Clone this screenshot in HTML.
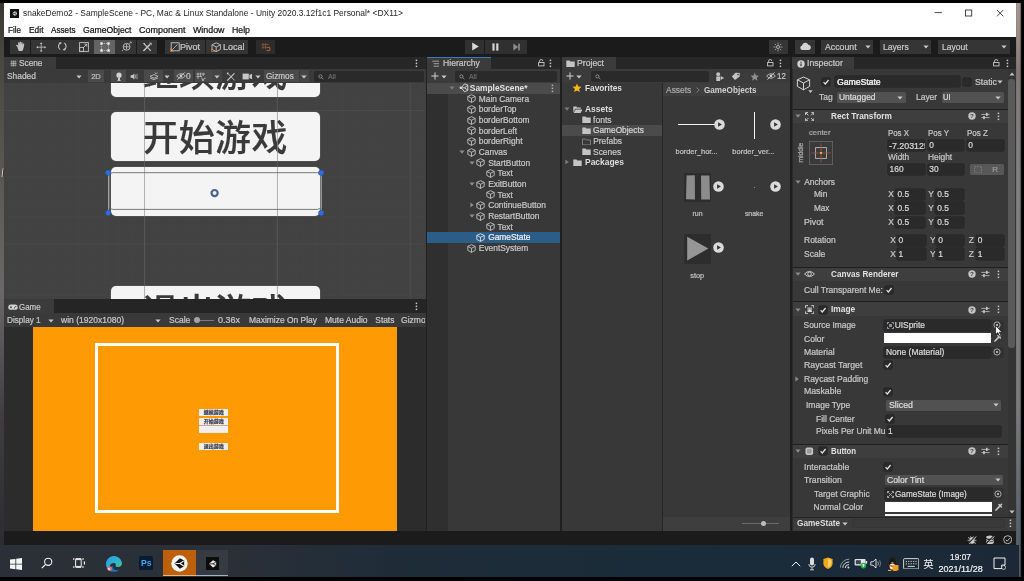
<!DOCTYPE html>
<html><head><meta charset="utf-8"><title>Unity</title>
<style>
html,body{margin:0;padding:0;background:#000;}
body{width:1024px;height:581px;overflow:hidden;position:relative;font-family:"Liberation Sans","Noto Sans CJK SC",sans-serif;}
#r{position:absolute;left:0;top:0;width:1024px;height:581px;overflow:hidden;filter:blur(.4px);}
#r div,#r span,#r svg{position:absolute;}
#r div{box-sizing:border-box;}
.t{white-space:nowrap;line-height:1;-webkit-text-stroke:.22px;}
.cj{font-family:"Liberation Sans","Noto Sans CJK SC",sans-serif;}
</style></head><body><div id="r">
<div style="left:0px;top:0px;width:1024px;height:581px;background:#000;"></div>
<div style="left:0px;top:3px;width:4.2px;height:543px;background:linear-gradient(180deg,#3b3733 0%,#4a4642 10%,#575550 27%,#6a6868 53%,#5a585a 62%,#3e3c40 77%,#2c2c32 100%);"></div>
<div style="left:1015.8px;top:3px;width:8.2px;height:573.8px;background:linear-gradient(180deg,#a89a94 0%,#9c8e8a 6%,#857c7a 12%,#838383 30%,#7e7e7e 70%,#5e666e 90%,#525c68 100%);"></div>
<div style="left:1015.8px;top:3px;width:8.2px;height:573.8px;background:linear-gradient(90deg,rgba(0,0,0,.2) 0%,rgba(0,0,0,0) 12%,rgba(0,0,0,.06) 50%,rgba(0,0,0,.45) 60%,rgba(0,0,0,.9) 68%,#000 76%);"></div>
<div style="left:4px;top:3px;width:1011.8px;height:33.5px;background:#fff;"></div>
<div style="left:10px;top:8.5px;width:9px;height:9px;background:#111;"></div>
<svg style="left:10px;top:8.5px;" width="9" height="9" viewBox="0 0 9 9"><path d="M2 4.5 L4.5 2.3 L7 3 L7 6 L4.5 6.7 Z" fill="#cfcfcf"/><path d="M4.5 4.5 L2 4.5 M4.5 4.5 L7 3 M4.5 4.5 L7 6" stroke="#111" stroke-width=".6"/></svg>
<span class="t" style="left:23.00px;top:9px;font-size:8.4px;color:#262626;transform:scaleX(1.0090);transform-origin:left center;-webkit-text-stroke:0;">snakeDemo2 - SampleScene - PC, Mac &amp; Linux Standalone - Unity 2020.3.12f1c1 Personal* &lt;DX11&gt;</span>
<svg style="left:930px;top:8px;" width="80" height="12" viewBox="0 0 80 12"><path d="M4.6 4.6 H11.8" stroke="#333" stroke-width=".9"/><rect x="35.5" y="2" width="6.2" height="6" fill="none" stroke="#333" stroke-width=".9"/><path d="M67 2 L73.3 8.3 M73.3 2 L67 8.3" stroke="#333" stroke-width=".9"/></svg>
<span class="t" style="left:8.00px;top:26px;font-size:8.6px;color:#111;transform:scaleX(0.9381);transform-origin:left center;">File</span>
<span class="t" style="left:29.00px;top:26px;font-size:8.6px;color:#111;transform:scaleX(0.9784);transform-origin:left center;">Edit</span>
<span class="t" style="left:51.00px;top:26px;font-size:8.6px;color:#111;transform:scaleX(0.9493);transform-origin:left center;">Assets</span>
<span class="t" style="left:83.00px;top:26px;font-size:8.6px;color:#111;transform:scaleX(1.0047);transform-origin:left center;">GameObject</span>
<span class="t" style="left:139.00px;top:26px;font-size:8.6px;color:#111;transform:scaleX(1.0458);transform-origin:left center;">Component</span>
<span class="t" style="left:193.00px;top:26px;font-size:8.6px;color:#111;transform:scaleX(1.0298);transform-origin:left center;">Window</span>
<span class="t" style="left:232.00px;top:26px;font-size:8.6px;color:#111;transform:scaleX(1.0177);transform-origin:left center;">Help</span>
<div style="left:4px;top:36.5px;width:1011.8px;height:20px;background:#1b1b1b;"></div>
<div style="left:9.9px;top:39.5px;width:20.6px;height:14.3px;background:#353535;"></div>
<div style="left:31px;top:39.5px;width:20.6px;height:14.3px;background:#353535;"></div>
<div style="left:52.1px;top:39.5px;width:20.6px;height:14.3px;background:#353535;"></div>
<div style="left:73.2px;top:39.5px;width:20.6px;height:14.3px;background:#353535;"></div>
<div style="left:94.3px;top:39.5px;width:20.6px;height:14.3px;background:#646464;"></div>
<div style="left:115.4px;top:39.5px;width:20.6px;height:14.3px;background:#353535;"></div>
<div style="left:136.5px;top:39.5px;width:20.6px;height:14.3px;background:#353535;"></div>
<svg style="left:15.3px;top:40.8px;" width="10.6" height="10.6" viewBox="0 0 10.6 10.6"><path d="M2.4 6 L1 4.2 Q1.5 3.2 2.5 4 L3.2 4.9 L3.1 1.7 Q3.7 .9 4.3 1.7 L4.5 3.6 L4.6 .9 Q5.3 .2 5.9 .9 L6 3.6 L6.4 1.4 Q7.1 .8 7.6 1.5 L7.5 4 L8.2 2.6 Q8.9 2.2 9.3 2.9 L8.7 6.6 Q8.2 8.8 7.2 10 L3.8 10 Q3 8 2.4 6 Z" fill="#c4c4c4"/></svg>
<svg style="left:36.3px;top:41.5px;" width="10.4" height="10.4" viewBox="0 0 10.4 10.4"><path d="M5.2 1.6 V8.8 M1.6 5.2 H8.8" stroke="#c4c4c4" stroke-width=".8"/><path d="M5.2 .2 L6.5 2 H3.9Z M5.2 10.2 L6.5 8.4 H3.9Z M.2 5.2 L2 3.9 V6.5Z M10.2 5.2 L8.4 3.9 V6.5Z" fill="#c4c4c4"/></svg>
<svg style="left:57.3px;top:41.3px;" width="10.6" height="10.6" viewBox="0 0 10.6 10.6"><path d="M3.2 8.6 A4 4 0 0 1 3.4 1.9" fill="none" stroke="#c4c4c4" stroke-width="1.1"/><path d="M7.4 2 A4 4 0 0 1 7.2 8.7" fill="none" stroke="#c4c4c4" stroke-width="1.1"/><path d="M2.2 1 L5 1.7 L3 3.6Z M8.4 9.6 L5.6 8.9 L7.6 7Z" fill="#c4c4c4"/></svg>
<svg style="left:78.6px;top:41.6px;" width="10" height="10" viewBox="0 0 10 10"><rect x=".6" y=".6" width="8.8" height="8.8" fill="none" stroke="#c4c4c4" stroke-width=".9"/><rect x=".6" y="5.4" width="4" height="4" fill="none" stroke="#c4c4c4" stroke-width=".9"/><path d="M4.6 5.4 L7.6 2.4 M5.4 2.2 H7.8 V4.6" fill="none" stroke="#c4c4c4" stroke-width=".9"/></svg>
<svg style="left:99.6px;top:41.6px;" width="10" height="10" viewBox="0 0 10 10"><path d="M1.5 1.5 H8.5 V8.5 H1.5Z" fill="none" stroke="#e8e8e8" stroke-width=".6" stroke-dasharray="1.2 1"/><g fill="#f0f0f0"><rect x=".3" y=".3" width="2.4" height="2.4"/><rect x="7.3" y=".3" width="2.4" height="2.4"/><rect x=".3" y="7.3" width="2.4" height="2.4"/><rect x="7.3" y="7.3" width="2.4" height="2.4"/></g></svg>
<svg style="left:120.5px;top:41.2px;" width="11" height="11" viewBox="0 0 11 11"><circle cx="5.6" cy="5.8" r="3.4" fill="none" stroke="#c4c4c4" stroke-width=".9"/><path d="M5.6 3 V8.6 M2.6 5.8 H8.4" stroke="#c4c4c4" stroke-width=".8"/><path d="M1 10 L2.4 8.6 M8.6 2.6 L10 1.2 M8.8 1 H10.2 V2.4" stroke="#c4c4c4" stroke-width=".8" fill="none"/></svg>
<svg style="left:141.6px;top:41.5px;" width="10.4" height="10.4" viewBox="0 0 10.4 10.4"><path d="M1.4 9 L8 2.4" stroke="#c4c4c4" stroke-width="1.5"/><path d="M2 1.6 L8.8 8.8" stroke="#c4c4c4" stroke-width="1.2"/><path d="M7 .8 L9.6 .8 L9.6 3.4Z M.8 1 L3 1 L3 3.2Z" fill="#c4c4c4"/></svg>
<div style="left:165.2px;top:39.5px;width:40.2px;height:14.3px;background:#353535;"></div>
<div style="left:206px;top:39.5px;width:42.2px;height:14.3px;background:#353535;"></div>
<div style="left:256px;top:39.5px;width:18.6px;height:14.3px;background:#2c2c2c;"></div>
<svg style="left:169.5px;top:41.7px;" width="10" height="10" viewBox="0 0 10 10"><rect x="1.2" y=".8" width="8" height="8" fill="none" stroke="#c4c4c4" stroke-width=".9"/><path d="M1.2 8.8 L7.6 2.4" stroke="#c4c4c4" stroke-width=".8"/><path d="M.4 6 V9.6 H4" fill="none" stroke="#c8702a" stroke-width=".9"/></svg>
<span class="t" style="left:180.20px;top:43px;font-size:8.4px;color:#c6c6c6;transform:scaleX(1.0817);transform-origin:left center;">Pivot</span>
<svg style="left:211px;top:41.5px;" width="10.5" height="10.5" viewBox="0 0 10.5 10.5"><path d="M5.2 .8 L9.4 2.8 V7.4 L5.2 9.6 L1 7.4 V2.8Z M1 2.8 L5.2 5 L9.4 2.8 M5.2 5 V9.6" fill="none" stroke="#c4c4c4" stroke-width=".9"/><path d="M.6 6.4 V9.6 H4" fill="none" stroke="#c8702a" stroke-width=".9"/></svg>
<span class="t" style="left:222.80px;top:43px;font-size:8.4px;color:#c6c6c6;transform:scaleX(1.0706);transform-origin:left center;">Local</span>
<svg style="left:260.5px;top:41.5px;" width="10.5" height="10.5" viewBox="0 0 10.5 10.5"><path d="M2 1 V7 M4.6 1 V7 M.6 2.6 H8 M.6 5.2 H6" stroke="#8a5a3a" stroke-width=".8"/><path d="M6 5.4 H8.8 V8.6 H5.4" fill="none" stroke="#b4622c" stroke-width="1"/></svg>
<div style="left:464.6px;top:39.7px;width:19.4px;height:14px;background:#303030;"></div>
<div style="left:484.8px;top:39.7px;width:20.8px;height:14px;background:#303030;"></div>
<div style="left:506.4px;top:39.7px;width:20.8px;height:14px;background:#303030;"></div>
<svg style="left:470.5px;top:42.2px;" width="9" height="9" viewBox="0 0 9 9"><path d="M1.2 .6 L7.8 4.5 L1.2 8.4Z" fill="#d8d8d8"/></svg>
<svg style="left:490.5px;top:42.5px;" width="9" height="8" viewBox="0 0 9 8"><rect x="1.4" y=".4" width="2.2" height="7.2" fill="#d4d4d4"/><rect x="5.2" y=".4" width="2.2" height="7.2" fill="#d4d4d4"/></svg>
<svg style="left:511.5px;top:42.5px;" width="10" height="8" viewBox="0 0 10 8"><path d="M1.4 .6 L6.2 4 L1.4 7.4Z" fill="#8c8c8c"/><rect x="6.2" y=".6" width="1.6" height="6.8" fill="#8c8c8c"/></svg>
<div style="left:768.5px;top:39.7px;width:19.5px;height:14px;background:#353535;"></div>
<div style="left:794.8px;top:39.7px;width:20.4px;height:14px;background:#353535;"></div>
<div style="left:821.4px;top:39.7px;width:52px;height:14px;background:#353535;"></div>
<div style="left:879.9px;top:39.7px;width:51.6px;height:14px;background:#353535;"></div>
<div style="left:938.4px;top:39.7px;width:71.8px;height:14px;background:#353535;"></div>
<svg style="left:773px;top:41.8px;" width="10" height="10" viewBox="0 0 10 10"><circle cx="5" cy="5" r="1.5" fill="none" stroke="#c4c4c4" stroke-width=".8"/><path d="M5 .6 V2.6 M5 7.4 V9.4 M.6 5 H2.6 M7.4 5 H9.4 M1.9 1.9 L3.2 3.2 M6.8 6.8 L8.1 8.1 M1.9 8.1 L3.2 6.8 M6.8 3.2 L8.1 1.9" stroke="#c4c4c4" stroke-width=".7"/></svg>
<svg style="left:798.5px;top:42px;" width="13" height="9" viewBox="0 0 13 9"><path d="M3 8 A2.4 2.4 0 0 1 3 3.4 A3.4 3.4 0 0 1 9.4 2.8 A2.7 2.7 0 0 1 10.2 8 Z" fill="#d2d2d2"/></svg>
<span class="t" style="left:825.00px;top:43px;font-size:8.4px;color:#c6c6c6;transform:scaleX(1.0444);transform-origin:left center;">Account</span>
<span class="t" style="left:883.20px;top:43px;font-size:8.4px;color:#c6c6c6;transform:scaleX(1.0233);transform-origin:left center;">Layers</span>
<span class="t" style="left:941.70px;top:43px;font-size:8.4px;color:#c6c6c6;transform:scaleX(1.0230);transform-origin:left center;">Layout</span>
<svg style="left:864.8px;top:45px;" width="6" height="4" viewBox="0 0 6 4"><path d="M.4 .4 H5.6 L3 3.6Z" fill="#c8c8c8"/></svg>
<svg style="left:922.8px;top:45px;" width="6" height="4" viewBox="0 0 6 4"><path d="M.4 .4 H5.6 L3 3.6Z" fill="#c8c8c8"/></svg>
<svg style="left:1000.6px;top:45px;" width="6" height="4" viewBox="0 0 6 4"><path d="M.4 .4 H5.6 L3 3.6Z" fill="#c8c8c8"/></svg>
<div style="left:4px;top:56.5px;width:1012px;height:475px;background:#262626;"></div>
<div style="left:4px;top:56.5px;width:421.5px;height:12.5px;background:#272727;"></div>
<div style="left:4px;top:56.5px;width:51.5px;height:12.5px;background:#3b3b3b;"></div>
<div style="left:4px;top:69px;width:421.5px;height:14px;background:#3a3a3a;"></div>
<div style="left:4px;top:83px;width:421.5px;height:216px;background:#424242;"></div>
<div style="left:4px;top:299px;width:421.5px;height:14px;background:#252525;"></div>
<div style="left:4px;top:299px;width:50px;height:14px;background:#3b3b3b;"></div>
<div style="left:4px;top:313px;width:421.5px;height:14px;background:#393939;"></div>
<div style="left:4px;top:327px;width:422px;height:204.5px;background:#2c2c2c;"></div>
<div style="left:427px;top:56.5px;width:133px;height:12.5px;background:#272727;"></div>
<div style="left:427px;top:57px;width:64px;height:12px;background:#3b3b3b;"></div>
<div style="left:427px;top:56.5px;width:64px;height:1px;background:#3a79bb;"></div>
<div style="left:427px;top:69px;width:133px;height:14px;background:#3b3b3b;"></div>
<div style="left:427px;top:83px;width:133px;height:448px;background:#383838;"></div>
<div style="left:562px;top:56.5px;width:228px;height:12.5px;background:#272727;"></div>
<div style="left:562px;top:57px;width:54px;height:12px;background:#3b3b3b;"></div>
<div style="left:562px;top:69px;width:228px;height:14px;background:#3b3b3b;"></div>
<div style="left:562px;top:83px;width:228px;height:448px;background:#383838;"></div>
<div style="left:792px;top:56.5px;width:224px;height:12.5px;background:#272727;"></div>
<div style="left:792px;top:57px;width:62px;height:12px;background:#3b3b3b;"></div>
<div style="left:792px;top:69px;width:224px;height:462px;background:#383838;"></div>
<div style="left:4px;top:531px;width:1011.8px;height:14px;background:#1b1b1b;"></div>
<div style="left:0px;top:545px;width:1019px;height:31.8px;background:linear-gradient(90deg,#2b3038 0%,#2a3038 22%,#1e2c38 40%,#1a2c3a 70%,#1c2836 100%);"></div>
<div style="left:790px;top:56.5px;width:1.7px;height:474.5px;background:#1e1e1e;"></div>
<div style="left:560px;top:56.5px;width:1.6px;height:474.5px;background:#1f1f1f;"></div>
<div style="left:425.6px;top:56.5px;width:1.2px;height:474.5px;background:#212121;"></div>
<svg style="left:9.5px;top:59.5px;" width="7" height="7" viewBox="0 0 7 7"><path d="M1.8 .4 V6.6 M3.5 .4 V6.6 M5.2 .4 V6.6 M.4 1.8 H6.6 M.4 3.5 H6.6 M.4 5.2 H6.6" stroke="#c4c4c4" stroke-width=".6"/></svg>
<span class="t" style="left:19.30px;top:59px;font-size:8.4px;color:#c6c6c6;transform:scaleX(0.9866);transform-origin:left center;">Scene</span>
<svg style="left:415px;top:58.5px;" width="3" height="9" viewBox="0 0 3 9"><g fill="#c8c8c8"><rect x=".7" y=".6" width="1.5" height="1.5"/><rect x=".7" y="3.6" width="1.5" height="1.5"/><rect x=".7" y="6.6" width="1.5" height="1.5"/></g></svg>
<span class="t" style="left:7.00px;top:72px;font-size:8.4px;color:#c6c6c6;">Shaded</span>
<svg style="left:75.5px;top:74.5px;" width="6" height="4" viewBox="0 0 6 4"><path d="M.4 .4 H5.6 L3 3.6Z" fill="#c8c8c8"/></svg>
<div style="left:88px;top:70.3px;width:16px;height:12px;background:#4a4a4a;"></div>
<span class="t" style="left:91.14px;top:73px;font-size:7.6px;color:#bdbdbd;">2D</span>
<div style="left:110.6px;top:70.3px;width:15.4px;height:12px;background:#4a4a4a;"></div>
<svg style="left:114.5px;top:71.8px;" width="8" height="9.5" viewBox="0 0 8 9.5"><circle cx="4" cy="3.2" r="2.6" fill="#d0d0d0"/><rect x="3" y="5.6" width="2" height="2.4" fill="#d0d0d0"/><rect x="2.4" y="8" width="3.2" height=".9" fill="#d0d0d0"/></svg>
<svg style="left:130px;top:73px;" width="9" height="7" viewBox="0 0 9 7"><path d="M.6 2.2 H2.2 L4.4 .4 V6.6 L2.2 4.8 H.6Z" fill="#c8c8c8"/><path d="M5.6 1.6 V5.4 M7 .8 V6.2" stroke="#b0b0b0" stroke-width=".8"/></svg>
<div style="left:144px;top:70.3px;width:18.6px;height:12px;background:#4a4a4a;"></div>
<svg style="left:148.5px;top:72.3px;" width="10" height="8" viewBox="0 0 10 8"><path d="M1 4.4 L5 2.6 L9 4.4 L5 6.2Z M1 6 L5 7.6 L9 6" fill="none" stroke="#c8c8c8" stroke-width=".8"/><path d="M6 .6 L7 2.2 M8.2 .4 L7.6 1.8" stroke="#c8c8c8" stroke-width=".7"/></svg>
<svg style="left:163.8px;top:74.6px;" width="6" height="4" viewBox="0 0 6 4"><path d="M.4 .4 H5.6 L3 3.6Z" fill="#c8c8c8"/></svg>
<div style="left:174px;top:70.3px;width:19px;height:12px;background:#4a4a4a;"></div>
<svg style="left:175.5px;top:72.2px;" width="10" height="8" viewBox="0 0 10 8"><path d="M.6 4 Q5 -.6 9.4 4 Q5 8.6 .6 4Z" fill="none" stroke="#c8c8c8" stroke-width=".8"/><circle cx="5" cy="4" r="1.4" fill="#c8c8c8"/><path d="M1.4 7.6 L8.6 .4" stroke="#c8c8c8" stroke-width=".9"/></svg>
<span class="t" style="left:186.00px;top:72px;font-size:8.4px;color:#c6c6c6;">0</span>
<div style="left:195px;top:70.3px;width:16.8px;height:12px;background:#4a4a4a;"></div>
<div style="left:212.2px;top:70.3px;width:9.6px;height:12px;background:#444444;"></div>
<svg style="left:195.5px;top:71.8px;" width="10" height="9.5" viewBox="0 0 10 9.5"><path d="M2 .6 V7 M4.6 .6 V5 M7.2 .6 V4 M.4 2 H9 M.4 4.4 H6" stroke="#c8c8c8" stroke-width=".7"/><path d="M5.6 5.6 L7 9 L8 6.6 L9.6 6" stroke="#c8c8c8" stroke-width=".8" fill="none"/></svg>
<svg style="left:214px;top:74.6px;" width="6" height="4" viewBox="0 0 6 4"><path d="M.4 .4 H5.6 L3 3.6Z" fill="#c8c8c8"/></svg>
<svg style="left:225.5px;top:71.8px;" width="10" height="9.5" viewBox="0 0 10 9.5"><path d="M1.2 8.6 L8.4 1.4" stroke="#c8c8c8" stroke-width="1.2"/><path d="M1.6 1.2 L8.6 8.4" stroke="#c8c8c8" stroke-width=".9"/><path d="M.8 .6 L3 .8 L1 2.8Z" fill="#c8c8c8"/></svg>
<svg style="left:241.5px;top:73px;" width="11" height="7" viewBox="0 0 11 7"><rect x=".6" y=".6" width="6.2" height="5.8" fill="#c8c8c8"/><path d="M7.4 2 L10 .8 V6.2 L7.4 5Z" fill="#c8c8c8"/></svg>
<svg style="left:255px;top:74.6px;" width="6" height="4" viewBox="0 0 6 4"><path d="M.4 .4 H5.6 L3 3.6Z" fill="#c8c8c8"/></svg>
<div style="left:264px;top:70.3px;width:35px;height:12px;background:#4a4a4a;"></div>
<span class="t" style="left:266.00px;top:72px;font-size:8.4px;color:#c6c6c6;transform:scaleX(0.9765);transform-origin:left center;">Gizmos</span>
<div style="left:299.6px;top:70.3px;width:9.6px;height:12px;background:#454545;"></div>
<svg style="left:300.7px;top:74.6px;" width="6" height="4" viewBox="0 0 6 4"><path d="M.4 .4 H5.6 L3 3.6Z" fill="#c8c8c8"/></svg>
<div style="left:314.3px;top:70.6px;width:109.5px;height:11px;background:#2a2a2a;border-radius:2px;"></div>
<svg style="left:317.5px;top:73.5px;" width="7" height="6" viewBox="0 0 7 6"><circle cx="2.4" cy="2.4" r="1.6" fill="none" stroke="#9a9a9a" stroke-width=".8"/><path d="M3.6 3.6 L5.4 5.2" stroke="#9a9a9a" stroke-width=".8"/></svg>
<span class="t" style="left:328.30px;top:73px;font-size:8px;color:#6c6c6c;transform:scaleX(0.8660);transform-origin:left center;">All</span>
<svg style="left:4px;top:83px;" width="420.5" height="216" viewBox="0 0 420.5 216"><path d="M8.40 0 V216" stroke="#464646" stroke-width=".6"/><path d="M21.63 0 V216" stroke="#464646" stroke-width=".6"/><path d="M34.86 0 V216" stroke="#464646" stroke-width=".6"/><path d="M48.09 0 V216" stroke="#464646" stroke-width=".6"/><path d="M61.32 0 V216" stroke="#464646" stroke-width=".6"/><path d="M74.55 0 V216" stroke="#464646" stroke-width=".6"/><path d="M87.78 0 V216" stroke="#464646" stroke-width=".6"/><path d="M101.01 0 V216" stroke="#464646" stroke-width=".6"/><path d="M114.24 0 V216" stroke="#464646" stroke-width=".6"/><path d="M127.47 0 V216" stroke="#464646" stroke-width=".6"/><path d="M140.70 0 V216" stroke="#464646" stroke-width=".6"/><path d="M153.93 0 V216" stroke="#464646" stroke-width=".6"/><path d="M167.16 0 V216" stroke="#464646" stroke-width=".6"/><path d="M180.39 0 V216" stroke="#464646" stroke-width=".6"/><path d="M193.62 0 V216" stroke="#464646" stroke-width=".6"/><path d="M206.85 0 V216" stroke="#464646" stroke-width=".6"/><path d="M220.08 0 V216" stroke="#464646" stroke-width=".6"/><path d="M233.31 0 V216" stroke="#464646" stroke-width=".6"/><path d="M246.54 0 V216" stroke="#464646" stroke-width=".6"/><path d="M259.77 0 V216" stroke="#464646" stroke-width=".6"/><path d="M273.00 0 V216" stroke="#464646" stroke-width=".6"/><path d="M286.23 0 V216" stroke="#464646" stroke-width=".6"/><path d="M299.46 0 V216" stroke="#464646" stroke-width=".6"/><path d="M312.69 0 V216" stroke="#464646" stroke-width=".6"/><path d="M325.92 0 V216" stroke="#464646" stroke-width=".6"/><path d="M339.15 0 V216" stroke="#464646" stroke-width=".6"/><path d="M352.38 0 V216" stroke="#464646" stroke-width=".6"/><path d="M365.61 0 V216" stroke="#464646" stroke-width=".6"/><path d="M378.84 0 V216" stroke="#464646" stroke-width=".6"/><path d="M392.07 0 V216" stroke="#464646" stroke-width=".6"/><path d="M405.30 0 V216" stroke="#464646" stroke-width=".6"/><path d="M418.53 0 V216" stroke="#464646" stroke-width=".6"/><path d="M0 0.94 H420.5" stroke="#464646" stroke-width=".6"/><path d="M0 14.17 H420.5" stroke="#464646" stroke-width=".6"/><path d="M0 27.40 H420.5" stroke="#464646" stroke-width=".6"/><path d="M0 40.63 H420.5" stroke="#464646" stroke-width=".6"/><path d="M0 53.86 H420.5" stroke="#464646" stroke-width=".6"/><path d="M0 67.09 H420.5" stroke="#464646" stroke-width=".6"/><path d="M0 80.32 H420.5" stroke="#464646" stroke-width=".6"/><path d="M0 93.55 H420.5" stroke="#464646" stroke-width=".6"/><path d="M0 106.78 H420.5" stroke="#464646" stroke-width=".6"/><path d="M0 120.01 H420.5" stroke="#464646" stroke-width=".6"/><path d="M0 133.24 H420.5" stroke="#464646" stroke-width=".6"/><path d="M0 146.47 H420.5" stroke="#464646" stroke-width=".6"/><path d="M0 159.70 H420.5" stroke="#464646" stroke-width=".6"/><path d="M0 172.93 H420.5" stroke="#464646" stroke-width=".6"/><path d="M0 186.16 H420.5" stroke="#464646" stroke-width=".6"/><path d="M0 199.39 H420.5" stroke="#464646" stroke-width=".6"/><path d="M0 212.62 H420.5" stroke="#464646" stroke-width=".6"/><path d="M140.60 0 V216" stroke="#4e4e4e" stroke-width=".8"/><path d="M273.30 0 V216" stroke="#4e4e4e" stroke-width=".8"/><path d="M406.60 0 V216" stroke="#4e4e4e" stroke-width=".8"/><path d="M0 27.40 H420.5" stroke="#4e4e4e" stroke-width=".8"/><path d="M0 161.20 H420.5" stroke="#4e4e4e" stroke-width=".8"/></svg>
<div style="left:4px;top:83px;width:420.5px;height:216px;overflow:hidden;">
<div style="left:106.6px;top:-35.8px;width:209px;height:49.7px;background:#f4f4f4;border-radius:5px;box-shadow:0 0 0 .6px #5a5a5a;"></div>
<span class="t cj" style="left:106.6px;width:209px;text-align:center;top:-26.35px;font-size:36px;line-height:36px;color:#3a3a3a;font-weight:500;letter-spacing:.3px;-webkit-text-stroke:.15px;">继续游戏</span>
<div style="left:106.6px;top:28.7px;width:209px;height:49.7px;background:#f4f4f4;border-radius:5px;box-shadow:0 0 0 .6px #5a5a5a;"></div>
<span class="t cj" style="left:106.6px;width:209px;text-align:center;top:38.15px;font-size:36px;line-height:36px;color:#3a3a3a;font-weight:500;letter-spacing:.3px;-webkit-text-stroke:.15px;">开始游戏</span>
<div style="left:106.6px;top:83.5px;width:209px;height:49.7px;background:#f4f4f4;border-radius:5px;box-shadow:0 0 0 .6px #5a5a5a;"></div>
<div style="left:106.6px;top:203px;width:209px;height:49.7px;background:#f4f4f4;border-radius:5px;box-shadow:0 0 0 .6px #5a5a5a;"></div>
<span class="t cj" style="left:106.6px;width:209px;text-align:center;top:212.45px;font-size:36px;line-height:36px;color:#3a3a3a;font-weight:500;letter-spacing:.3px;-webkit-text-stroke:.15px;">退出游戏</span>
</div>
<svg style="left:4px;top:83px;" width="420.5" height="216" viewBox="0 0 420.5 216"><path d="M140.6 0 V216 M273.3 0 V216" stroke="#8a8a8a" stroke-width=".7" opacity=".3"/></svg>
<div style="left:4px;top:83px;width:420.5px;height:216px;overflow:hidden;">
<div style="left:140.25px;top:-35.8px;width:.7px;height:49.7px;background:rgba(150,150,150,.6);"></div>
<div style="left:272.95px;top:-35.8px;width:.7px;height:49.7px;background:rgba(150,150,150,.6);"></div>
<div style="left:140.25px;top:28.7px;width:.7px;height:49.7px;background:rgba(150,150,150,.6);"></div>
<div style="left:272.95px;top:28.7px;width:.7px;height:49.7px;background:rgba(150,150,150,.6);"></div>
<div style="left:140.25px;top:83.5px;width:.7px;height:49.7px;background:rgba(150,150,150,.6);"></div>
<div style="left:272.95px;top:83.5px;width:.7px;height:49.7px;background:rgba(150,150,150,.6);"></div>
<div style="left:140.25px;top:203px;width:.7px;height:49.7px;background:rgba(150,150,150,.6);"></div>
<div style="left:272.95px;top:203px;width:.7px;height:49.7px;background:rgba(150,150,150,.6);"></div>
</div>
<svg style="left:100px;top:165px;" width="230" height="56" viewBox="0 0 230 56"><rect x="9.3" y="7.7" width="211.7" height="36.7" rx="3.5" fill="none" stroke="#6a6a6a" stroke-width=".9"/><path d="M8.6 7.7 V48 M221.2 7.7 V48" stroke="#d8d8d8" stroke-width=".7"/><g fill="#2f6fd6" stroke="#1d4fa8" stroke-width=".5"><circle cx="8.2" cy="7.7" r="2.7"/><circle cx="221.2" cy="7.7" r="2.7"/><circle cx="8.2" cy="48" r="2.7"/><circle cx="221.2" cy="48" r="2.7"/></g><circle cx="114.6" cy="28.1" r="3.1" fill="#eaf1ff" stroke="#4d6088" stroke-width="2.2"/></svg>
<svg style="left:8px;top:304.4px;" width="10" height="6.4" viewBox="0 0 10 6.4"><rect x=".3" y=".6" width="9.4" height="5.2" rx="2.6" fill="#d0d0d0"/><path d="M2 3.2 H4 M3 2.2 V4.2" stroke="#333" stroke-width=".7"/><circle cx="6.6" cy="3.8" r=".6" fill="#333"/><circle cx="7.8" cy="2.6" r=".6" fill="#333"/></svg>
<span class="t" style="left:19.30px;top:303px;font-size:8.4px;color:#c6c6c6;transform:scaleX(0.9486);transform-origin:left center;">Game</span>
<svg style="left:415px;top:302px;" width="3" height="9" viewBox="0 0 3 9"><g fill="#c8c8c8"><rect x=".7" y=".6" width="1.5" height="1.5"/><rect x=".7" y="3.6" width="1.5" height="1.5"/><rect x=".7" y="6.6" width="1.5" height="1.5"/></g></svg>
<span class="t" style="left:7.30px;top:316px;font-size:8.4px;color:#c6c6c6;transform:scaleX(0.9754);transform-origin:left center;">Display 1</span>
<svg style="left:48.4px;top:318.6px;" width="6" height="4" viewBox="0 0 6 4"><path d="M.4 .4 H5.6 L3 3.6Z" fill="#c8c8c8"/></svg>
<span class="t" style="left:60.50px;top:316px;font-size:8.4px;color:#c6c6c6;transform:scaleX(1.0208);transform-origin:left center;">win (1920x1080)</span>
<svg style="left:154.9px;top:318.6px;" width="6" height="4" viewBox="0 0 6 4"><path d="M.4 .4 H5.6 L3 3.6Z" fill="#c8c8c8"/></svg>
<span class="t" style="left:168.60px;top:316px;font-size:8.4px;color:#c6c6c6;transform:scaleX(1.0184);transform-origin:left center;">Scale</span>
<div style="left:197px;top:319.8px;width:16.5px;height:0.9px;background:#7a7a7a;"></div>
<div style="left:194.2px;top:317.1px;width:6.2px;height:6.2px;background:#a4a4a4;border-radius:50%;"></div>
<span class="t" style="left:217.80px;top:316px;font-size:8.4px;color:#c6c6c6;transform:scaleX(1.0706);transform-origin:left center;">0.36x</span>
<span class="t" style="left:249.00px;top:316px;font-size:8.4px;color:#c6c6c6;transform:scaleX(1.0076);transform-origin:left center;">Maximize On Play</span>
<span class="t" style="left:325.30px;top:316px;font-size:8.4px;color:#c6c6c6;transform:scaleX(1.0159);transform-origin:left center;">Mute Audio</span>
<span class="t" style="left:375.30px;top:316px;font-size:8.4px;color:#c6c6c6;">Stats</span>
<div style="left:398px;top:313px;width:26.5px;height:14px;overflow:hidden;">
<span class="t" style="left:3.00px;top:3px;font-size:8.4px;color:#c6c6c6;transform:scaleX(1.0186);transform-origin:left center;">Gizmos</span>
</div>
<div style="left:33.4px;top:326.6px;width:363.2px;height:204.6px;background:#fe9a04;"></div>
<div style="left:94.5px;top:343px;width:244px;height:170px;background:transparent;border:3px solid #fdfdfd;"></div>
<div style="left:199px;top:409px;width:29.3px;height:6.8px;background:#f2efee;"></div>
<span class="t cj" style="left:199px;width:29.3px;text-align:center;top:408.6px;font-size:5px;line-height:6px;color:#3a3a4a;font-weight:700;">继续游戏</span>
<div style="left:199px;top:418px;width:29.3px;height:6.9px;background:#f2efee;"></div>
<span class="t cj" style="left:199px;width:29.3px;text-align:center;top:417.6px;font-size:5px;line-height:6px;color:#3a3a4a;font-weight:700;">开始游戏</span>
<div style="left:199px;top:425.8px;width:29.3px;height:6.8px;background:#f2efee;"></div>
<div style="left:199px;top:443.2px;width:29.3px;height:7px;background:#f2efee;"></div>
<span class="t cj" style="left:199px;width:29.3px;text-align:center;top:442.8px;font-size:5px;line-height:6px;color:#3a3a4a;font-weight:700;">退出游戏</span>
<div style="left:199px;top:425.4px;width:29.3px;height:0.6px;background:#c9a890;"></div>
<svg style="left:432.3px;top:59.6px;" width="7.4" height="7.4" viewBox="0 0 7.4 7.4"><path d="M.3 1.2 H7.1 M1.6 3.7 H7.1 M1.6 6.2 H7.1" stroke="#c4c4c4" stroke-width=".75"/></svg>
<span class="t" style="left:442.50px;top:59px;font-size:8.4px;color:#c6c6c6;transform:scaleX(1.0294);transform-origin:left center;">Hierarchy</span>
<svg style="left:537.5px;top:59px;" width="7" height="8" viewBox="0 0 7 8"><rect x=".6" y="3.5" width="5.4" height="3.4" fill="none" stroke="#c8c8c8" stroke-width=".9"/><path d="M1.6 3.5 V2.1 A1.6 1.6 0 0 1 4.8 2.1" fill="none" stroke="#c8c8c8" stroke-width=".9"/></svg>
<svg style="left:549px;top:58.5px;" width="3" height="9" viewBox="0 0 3 9"><g fill="#c8c8c8"><rect x=".7" y=".6" width="1.5" height="1.5"/><rect x=".7" y="3.6" width="1.5" height="1.5"/><rect x=".7" y="6.6" width="1.5" height="1.5"/></g></svg>
<svg style="left:431px;top:71.8px;" width="8" height="8" viewBox="0 0 8 8"><path d="M4 .4 V7.6 M.4 4 H7.6" stroke="#d0d0d0" stroke-width="1"/></svg>
<svg style="left:441px;top:74.6px;" width="6" height="4" viewBox="0 0 6 4"><path d="M.4 .4 H5.6 L3 3.6Z" fill="#c8c8c8"/></svg>
<div style="left:455px;top:70.6px;width:102px;height:11px;background:#2a2a2a;border-radius:2px;"></div>
<svg style="left:458.5px;top:73.5px;" width="7" height="6" viewBox="0 0 7 6"><circle cx="2.4" cy="2.4" r="1.6" fill="none" stroke="#9a9a9a" stroke-width=".8"/><path d="M3.6 3.6 L5.4 5.2" stroke="#9a9a9a" stroke-width=".8"/></svg>
<span class="t" style="left:468.50px;top:73px;font-size:8px;color:#6c6c6c;transform:scaleX(0.8660);transform-origin:left center;">All</span>
<div style="left:427px;top:83px;width:21px;height:448px;background:#2f2f2f;"></div>
<div style="left:427px;top:83px;width:133px;height:10.5px;background:#4b4b4b;"></div>
<div style="left:427px;top:232.4px;width:133px;height:10.4px;background:#2c5d88;"></div>
<svg style="left:449px;top:86.1px;" width="6" height="4" viewBox="0 0 6 4"><path d="M.4 .4 H5.6 L3 3.8Z" fill="#7a7a7a"/></svg>
<svg style="left:458.5px;top:83.3px;" width="10" height="9.6" viewBox="0 0 10 9.6"><path d="M5.6 .8 L8.8 2.2 V7.2 L5.6 8.8 L2.2 4.8Z M5.6 4.8 L2.2 4.8 M5.6 4.8 L8.8 2.2 M5.6 4.8 L8.8 7.2" fill="none" stroke="#dcdcdc" stroke-width=".9" stroke-linejoin="round"/><circle cx="1.8" cy="4.8" r="1.2" fill="#dcdcdc"/></svg>
<span class="t" style="left:469.80px;top:84px;font-size:8.4px;color:#e2e2e2;font-weight:bold;-webkit-text-stroke:0;">SampleScene*</span>
<svg style="left:551px;top:83.8px;" width="3" height="9" viewBox="0 0 3 9"><g fill="#b0b0b0"><rect x=".7" y=".6" width="1.5" height="1.5"/><rect x=".7" y="3.6" width="1.5" height="1.5"/><rect x=".7" y="6.6" width="1.5" height="1.5"/></g></svg>
<svg style="left:467px;top:94.267px;" width="9" height="9" viewBox="0 0 9 9"><path d="M4.5 .7 L8.2 2.4 V6.4 L4.5 8.4 L.8 6.4 V2.4Z M.8 2.4 L4.5 4.3 L8.2 2.4 M4.5 4.3 V8.4" fill="none" stroke="#c8c8c8" stroke-width=".85" stroke-linejoin="round"/></svg>
<span class="t" style="left:478.80px;top:95px;font-size:8.4px;color:#c6c6c6;">Main Camera</span>
<svg style="left:467px;top:104.934px;" width="9" height="9" viewBox="0 0 9 9"><path d="M4.5 .7 L8.2 2.4 V6.4 L4.5 8.4 L.8 6.4 V2.4Z M.8 2.4 L4.5 4.3 L8.2 2.4 M4.5 4.3 V8.4" fill="none" stroke="#c8c8c8" stroke-width=".85" stroke-linejoin="round"/></svg>
<span class="t" style="left:478.80px;top:105px;font-size:8.4px;color:#c6c6c6;">borderTop</span>
<svg style="left:467px;top:115.601px;" width="9" height="9" viewBox="0 0 9 9"><path d="M4.5 .7 L8.2 2.4 V6.4 L4.5 8.4 L.8 6.4 V2.4Z M.8 2.4 L4.5 4.3 L8.2 2.4 M4.5 4.3 V8.4" fill="none" stroke="#c8c8c8" stroke-width=".85" stroke-linejoin="round"/></svg>
<span class="t" style="left:478.80px;top:116px;font-size:8.4px;color:#c6c6c6;">borderBottom</span>
<svg style="left:467px;top:126.268px;" width="9" height="9" viewBox="0 0 9 9"><path d="M4.5 .7 L8.2 2.4 V6.4 L4.5 8.4 L.8 6.4 V2.4Z M.8 2.4 L4.5 4.3 L8.2 2.4 M4.5 4.3 V8.4" fill="none" stroke="#c8c8c8" stroke-width=".85" stroke-linejoin="round"/></svg>
<span class="t" style="left:478.80px;top:127px;font-size:8.4px;color:#c6c6c6;">borderLeft</span>
<svg style="left:467px;top:136.935px;" width="9" height="9" viewBox="0 0 9 9"><path d="M4.5 .7 L8.2 2.4 V6.4 L4.5 8.4 L.8 6.4 V2.4Z M.8 2.4 L4.5 4.3 L8.2 2.4 M4.5 4.3 V8.4" fill="none" stroke="#c8c8c8" stroke-width=".85" stroke-linejoin="round"/></svg>
<span class="t" style="left:478.80px;top:137px;font-size:8.4px;color:#c6c6c6;">borderRight</span>
<svg style="left:467px;top:147.602px;" width="9" height="9" viewBox="0 0 9 9"><path d="M4.5 .7 L8.2 2.4 V6.4 L4.5 8.4 L.8 6.4 V2.4Z M.8 2.4 L4.5 4.3 L8.2 2.4 M4.5 4.3 V8.4" fill="none" stroke="#c8c8c8" stroke-width=".85" stroke-linejoin="round"/></svg>
<span class="t" style="left:478.80px;top:148px;font-size:8.4px;color:#c6c6c6;">Canvas</span>
<svg style="left:459.4px;top:150.102px;" width="6" height="4" viewBox="0 0 6 4"><path d="M.4 .4 H5.6 L3 3.8Z" fill="#8c8c8c"/></svg>
<svg style="left:476.35px;top:158.269px;" width="9" height="9" viewBox="0 0 9 9"><path d="M4.5 .7 L8.2 2.4 V6.4 L4.5 8.4 L.8 6.4 V2.4Z M.8 2.4 L4.5 4.3 L8.2 2.4 M4.5 4.3 V8.4" fill="none" stroke="#c8c8c8" stroke-width=".85" stroke-linejoin="round"/></svg>
<span class="t" style="left:488.15px;top:159px;font-size:8.4px;color:#c6c6c6;">StartButton</span>
<svg style="left:468.75px;top:160.769px;" width="6" height="4" viewBox="0 0 6 4"><path d="M.4 .4 H5.6 L3 3.8Z" fill="#8c8c8c"/></svg>
<svg style="left:485.7px;top:168.936px;" width="9" height="9" viewBox="0 0 9 9"><path d="M4.5 .7 L8.2 2.4 V6.4 L4.5 8.4 L.8 6.4 V2.4Z M.8 2.4 L4.5 4.3 L8.2 2.4 M4.5 4.3 V8.4" fill="none" stroke="#c8c8c8" stroke-width=".85" stroke-linejoin="round"/></svg>
<span class="t" style="left:497.50px;top:169px;font-size:8.4px;color:#c6c6c6;">Text</span>
<svg style="left:476.35px;top:179.603px;" width="9" height="9" viewBox="0 0 9 9"><path d="M4.5 .7 L8.2 2.4 V6.4 L4.5 8.4 L.8 6.4 V2.4Z M.8 2.4 L4.5 4.3 L8.2 2.4 M4.5 4.3 V8.4" fill="none" stroke="#c8c8c8" stroke-width=".85" stroke-linejoin="round"/></svg>
<span class="t" style="left:488.15px;top:180px;font-size:8.4px;color:#c6c6c6;">ExitButton</span>
<svg style="left:468.75px;top:182.103px;" width="6" height="4" viewBox="0 0 6 4"><path d="M.4 .4 H5.6 L3 3.8Z" fill="#8c8c8c"/></svg>
<svg style="left:485.7px;top:190.27px;" width="9" height="9" viewBox="0 0 9 9"><path d="M4.5 .7 L8.2 2.4 V6.4 L4.5 8.4 L.8 6.4 V2.4Z M.8 2.4 L4.5 4.3 L8.2 2.4 M4.5 4.3 V8.4" fill="none" stroke="#c8c8c8" stroke-width=".85" stroke-linejoin="round"/></svg>
<span class="t" style="left:497.50px;top:191px;font-size:8.4px;color:#c6c6c6;">Text</span>
<svg style="left:476.35px;top:200.937px;" width="9" height="9" viewBox="0 0 9 9"><path d="M4.5 .7 L8.2 2.4 V6.4 L4.5 8.4 L.8 6.4 V2.4Z M.8 2.4 L4.5 4.3 L8.2 2.4 M4.5 4.3 V8.4" fill="none" stroke="#c8c8c8" stroke-width=".85" stroke-linejoin="round"/></svg>
<span class="t" style="left:488.15px;top:201px;font-size:8.4px;color:#c6c6c6;">ContinueButton</span>
<svg style="left:469.75px;top:202.437px;" width="4" height="6" viewBox="0 0 4 6"><path d="M.4 .4 V5.6 L3.8 3Z" fill="#8c8c8c"/></svg>
<svg style="left:476.35px;top:211.604px;" width="9" height="9" viewBox="0 0 9 9"><path d="M4.5 .7 L8.2 2.4 V6.4 L4.5 8.4 L.8 6.4 V2.4Z M.8 2.4 L4.5 4.3 L8.2 2.4 M4.5 4.3 V8.4" fill="none" stroke="#c8c8c8" stroke-width=".85" stroke-linejoin="round"/></svg>
<span class="t" style="left:488.15px;top:212px;font-size:8.4px;color:#c6c6c6;">RestartButton</span>
<svg style="left:468.75px;top:214.104px;" width="6" height="4" viewBox="0 0 6 4"><path d="M.4 .4 H5.6 L3 3.8Z" fill="#8c8c8c"/></svg>
<svg style="left:485.7px;top:222.271px;" width="9" height="9" viewBox="0 0 9 9"><path d="M4.5 .7 L8.2 2.4 V6.4 L4.5 8.4 L.8 6.4 V2.4Z M.8 2.4 L4.5 4.3 L8.2 2.4 M4.5 4.3 V8.4" fill="none" stroke="#c8c8c8" stroke-width=".85" stroke-linejoin="round"/></svg>
<span class="t" style="left:497.50px;top:223px;font-size:8.4px;color:#c6c6c6;">Text</span>
<svg style="left:476.35px;top:232.938px;" width="9" height="9" viewBox="0 0 9 9"><path d="M4.5 .7 L8.2 2.4 V6.4 L4.5 8.4 L.8 6.4 V2.4Z M.8 2.4 L4.5 4.3 L8.2 2.4 M4.5 4.3 V8.4" fill="none" stroke="#e8e8e8" stroke-width=".85" stroke-linejoin="round"/></svg>
<span class="t" style="left:488.15px;top:233px;font-size:8.4px;color:#f0f0f0;">GameState</span>
<svg style="left:467px;top:243.605px;" width="9" height="9" viewBox="0 0 9 9"><path d="M4.5 .7 L8.2 2.4 V6.4 L4.5 8.4 L.8 6.4 V2.4Z M.8 2.4 L4.5 4.3 L8.2 2.4 M4.5 4.3 V8.4" fill="none" stroke="#c8c8c8" stroke-width=".85" stroke-linejoin="round"/></svg>
<span class="t" style="left:478.80px;top:244px;font-size:8.4px;color:#c6c6c6;">EventSystem</span>
<svg style="left:566.2px;top:59.7px;" width="9" height="7.4" viewBox="0 0 9 7.4"><path d="M.3 .5 H3.5 L4.3 1.6 H8.7 V7 H.3Z" fill="#c4c4c4"/></svg>
<span class="t" style="left:577.30px;top:59px;font-size:8.4px;color:#c6c6c6;transform:scaleX(1.0327);transform-origin:left center;">Project</span>
<svg style="left:766.5px;top:59px;" width="7" height="8" viewBox="0 0 7 8"><rect x=".6" y="3.5" width="5.4" height="3.4" fill="none" stroke="#c8c8c8" stroke-width=".9"/><path d="M1.6 3.5 V2.1 A1.6 1.6 0 0 1 4.8 2.1" fill="none" stroke="#c8c8c8" stroke-width=".9"/></svg>
<svg style="left:779px;top:58.5px;" width="3" height="9" viewBox="0 0 3 9"><g fill="#c8c8c8"><rect x=".7" y=".6" width="1.5" height="1.5"/><rect x=".7" y="3.6" width="1.5" height="1.5"/><rect x=".7" y="6.6" width="1.5" height="1.5"/></g></svg>
<svg style="left:565.5px;top:71.8px;" width="8" height="8" viewBox="0 0 8 8"><path d="M4 .4 V7.6 M.4 4 H7.6" stroke="#d0d0d0" stroke-width="1"/></svg>
<svg style="left:576.4px;top:74.6px;" width="6" height="4" viewBox="0 0 6 4"><path d="M.4 .4 H5.6 L3 3.6Z" fill="#c8c8c8"/></svg>
<div style="left:591px;top:70.6px;width:118px;height:11px;background:#2a2a2a;border-radius:2px;"></div>
<svg style="left:594.5px;top:73.5px;" width="7" height="6" viewBox="0 0 7 6"><circle cx="2.4" cy="2.4" r="1.6" fill="none" stroke="#9a9a9a" stroke-width=".8"/><path d="M3.6 3.6 L5.4 5.2" stroke="#9a9a9a" stroke-width=".8"/></svg>
<svg style="left:714.5px;top:71.5px;" width="10" height="9.5" viewBox="0 0 10 9.5"><circle cx="3.2" cy="2.2" r="1.9" fill="#c4c4c4"/><rect x="1.3" y="4.4" width="3.8" height="4.6" fill="#c4c4c4"/><path d="M5.6 4 L9.2 6 L5.6 8Z" fill="#c4c4c4"/></svg>
<svg style="left:731px;top:72px;" width="9.5" height="8.5" viewBox="0 0 9.5 8.5"><path d="M4.6 .8 L8.8 1 L8.6 4.4 L4 8 L.8 4.6Z" fill="#c4c4c4"/><circle cx="7" cy="2.6" r=".8" fill="#3b3b3b"/></svg>
<svg style="left:749.5px;top:71.5px;" width="9.6" height="9.2" viewBox="0 0 9.6 9.2"><path d="M4.8 .6 L6 3.4 L9 3.7 L6.8 5.7 L7.5 8.7 L4.8 7.1 L2.1 8.7 L2.8 5.7 L.6 3.7 L3.6 3.4Z" fill="#8e8e8e"/></svg>
<svg style="left:765.5px;top:72.2px;" width="10" height="8" viewBox="0 0 10 8"><path d="M.6 4 Q5 -.6 9.4 4 Q5 8.6 .6 4Z" fill="none" stroke="#c8c8c8" stroke-width=".8"/><circle cx="5" cy="4" r="1.4" fill="#c8c8c8"/><path d="M1.4 7.6 L8.6 .4" stroke="#c8c8c8" stroke-width=".9"/></svg>
<span class="t" style="left:777.20px;top:72px;font-size:8.4px;color:#c6c6c6;transform:scaleX(0.9418);transform-origin:left center;">12</span>
<div style="left:562px;top:125.3px;width:100px;height:10.6px;background:#4b4b4b;"></div>
<div style="left:662px;top:83px;width:1px;height:448px;background:#262626;"></div>
<svg style="left:571.6px;top:83.1px;" width="10" height="9.6" viewBox="0 0 10 9.6"><path d="M5 .5 L6.3 3.5 L9.5 3.8 L7.1 5.9 L7.9 9.1 L5 7.4 L2.1 9.1 L2.9 5.9 L.5 3.8 L3.7 3.5Z" fill="#f2b81c"/></svg>
<span class="t" style="left:584.50px;top:84px;font-size:8.4px;color:#dedede;font-weight:bold;-webkit-text-stroke:0;transform:scaleX(0.9906);transform-origin:left center;">Favorites</span>
<svg style="left:564px;top:107.034px;" width="6" height="4" viewBox="0 0 6 4"><path d="M.4 .4 H5.6 L3 3.8Z" fill="#7a7a7a"/></svg>
<svg style="left:572.8px;top:105.634px;" width="9.6" height="7.4" viewBox="0 0 9.6 7.4"><path d="M.3 .6 H3.4 L4.2 1.6 H7.8 V2.8 H2.2 L.3 6.6Z" fill="#c4c4c4"/><path d="M2.6 3.4 H9.4 L7.6 7 H.6Z" fill="#c4c4c4"/></svg>
<span class="t" style="left:584.50px;top:105px;font-size:8.4px;color:#dedede;font-weight:bold;-webkit-text-stroke:0;transform:scaleX(1.0127);transform-origin:left center;">Assets</span>
<svg style="left:581.9px;top:116.301px;" width="9" height="7.4" viewBox="0 0 9 7.4"><path d="M.3 .5 H3.5 L4.3 1.6 H8.7 V7 H.3Z" fill="#c4c4c4"/></svg>
<span class="t" style="left:593.20px;top:116px;font-size:8.4px;color:#c6c6c6;transform:scaleX(1.0214);transform-origin:left center;">fonts</span>
<svg style="left:581.9px;top:126.968px;" width="9" height="7.4" viewBox="0 0 9 7.4"><path d="M.3 .5 H3.5 L4.3 1.6 H8.7 V7 H.3Z" fill="#c4c4c4"/></svg>
<span class="t" style="left:593.20px;top:126px;font-size:8.4px;color:#d4d4d4;transform:scaleX(0.9931);transform-origin:left center;">GameObjects</span>
<svg style="left:581.9px;top:137.635px;" width="9" height="7.4" viewBox="0 0 9 7.4"><path d="M.5 1 H3.4 L4.2 2 H8.5 V6.9 H.5Z" fill="none" stroke="#9a9a9a" stroke-width=".7"/></svg>
<span class="t" style="left:593.20px;top:137px;font-size:8.4px;color:#c6c6c6;">Prefabs</span>
<svg style="left:581.9px;top:148.302px;" width="9" height="7.4" viewBox="0 0 9 7.4"><path d="M.3 .5 H3.5 L4.3 1.6 H8.7 V7 H.3Z" fill="#c4c4c4"/></svg>
<span class="t" style="left:593.20px;top:148px;font-size:8.4px;color:#c6c6c6;transform:scaleX(1.0100);transform-origin:left center;">Scenes</span>
<svg style="left:565px;top:159.269px;" width="4" height="6" viewBox="0 0 4 6"><path d="M.4 .4 V5.6 L3.8 3Z" fill="#7a7a7a"/></svg>
<svg style="left:572.8px;top:158.769px;" width="9" height="7.4" viewBox="0 0 9 7.4"><path d="M.3 .5 H3.5 L4.3 1.6 H8.7 V7 H.3Z" fill="#c4c4c4"/></svg>
<span class="t" style="left:584.50px;top:158px;font-size:8.4px;color:#dedede;font-weight:bold;-webkit-text-stroke:0;transform:scaleX(1.0086);transform-origin:left center;">Packages</span>
<div style="left:663px;top:83px;width:127px;height:13px;background:#3e3e3e;"></div>
<span class="t" style="left:665.60px;top:86px;font-size:8.4px;color:#a8a8a8;transform:scaleX(1.0076);transform-origin:left center;">Assets</span>
<svg style="left:695.5px;top:87.4px;" width="4" height="6" viewBox="0 0 4 6"><path d="M.6 .6 L3.2 3 L.6 5.4" fill="none" stroke="#8c8c8c" stroke-width=".8"/></svg>
<span class="t" style="left:703.80px;top:86px;font-size:8.4px;color:#cfcfcf;font-weight:bold;-webkit-text-stroke:0;transform:scaleX(0.9712);transform-origin:left center;">GameObjects</span>
<div style="left:678px;top:124.2px;width:37px;height:1px;background:#f2f2f2;"></div>
<svg style="left:713.5px;top:119.1px;" width="11" height="11" viewBox="0 0 11 11"><circle cx="5.5" cy="5.5" r="5.3" fill="#dadada"/><path d="M4.1 3.3 L7.9 5.5 L4.1 7.7Z" fill="#333"/></svg>
<span class="t" style="left:675.25px;top:148px;font-size:7.6px;color:#c2c2c2;transform:scaleX(0.9746);transform-origin:center center;">border_hor...</span>
<div style="left:754px;top:112px;width:1px;height:27px;background:#f2f2f2;"></div>
<svg style="left:770px;top:119.1px;" width="11" height="11" viewBox="0 0 11 11"><circle cx="5.5" cy="5.5" r="5.3" fill="#dadada"/><path d="M4.1 3.3 L7.9 5.5 L4.1 7.7Z" fill="#333"/></svg>
<span class="t" style="left:732.37px;top:148px;font-size:7.6px;color:#c2c2c2;transform:scaleX(0.9843);transform-origin:center center;">border_ver...</span>
<div style="left:684px;top:172.7px;width:27.3px;height:29px;background:#2d2d2d;"></div>
<svg style="left:684px;top:172.7px;" width="27.3" height="29" viewBox="0 0 27.3 29"><path d="M2.6 2.6 L10.8 2.2 L11 26.6 L2 26.2Z" fill="#8c8c8c"/><path d="M17 2.4 L25.4 2.6 L26 26.4 L17.2 26.6Z" fill="#8c8c8c"/></svg>
<svg style="left:713px;top:180.7px;" width="11" height="11" viewBox="0 0 11 11"><circle cx="5.5" cy="5.5" r="5.3" fill="#dadada"/><path d="M4.1 3.3 L7.9 5.5 L4.1 7.7Z" fill="#333"/></svg>
<span class="t" style="left:691.51px;top:210px;font-size:7.6px;color:#c2c2c2;transform:scaleX(0.9103);transform-origin:center center;">run</span>
<div style="left:754.2px;top:186.6px;width:0.8px;height:1.6px;background:#8a8a8a;"></div>
<svg style="left:769.9px;top:180.7px;" width="11" height="11" viewBox="0 0 11 11"><circle cx="5.5" cy="5.5" r="5.3" fill="#dadada"/><path d="M4.1 3.3 L7.9 5.5 L4.1 7.7Z" fill="#333"/></svg>
<span class="t" style="left:744.36px;top:210px;font-size:7.6px;color:#c2c2c2;transform:scaleX(0.9122);transform-origin:center center;">snake</span>
<div style="left:684px;top:234px;width:27.3px;height:29.6px;background:#2d2d2d;"></div>
<svg style="left:684px;top:234px;" width="27.3" height="29.6" viewBox="0 0 27.3 29.6"><path d="M3.2 2.8 L24.4 14.6 L3.2 26.6Z" fill="#959595"/></svg>
<svg style="left:713px;top:242.1px;" width="11" height="11" viewBox="0 0 11 11"><circle cx="5.5" cy="5.5" r="5.3" fill="#dadada"/><path d="M4.1 3.3 L7.9 5.5 L4.1 7.7Z" fill="#333"/></svg>
<span class="t" style="left:689.82px;top:272px;font-size:7.6px;color:#c2c2c2;transform:scaleX(0.9746);transform-origin:center center;">stop</span>
<div style="left:663px;top:517px;width:127px;height:14px;background:#3e3e3e;"></div>
<div style="left:742px;top:523.2px;width:37px;height:0.9px;background:#6a6a6a;"></div>
<div style="left:760.8px;top:520.8px;width:5.6px;height:5.6px;background:#bdbdbd;border-radius:50%;"></div>
<svg style="left:796.5px;top:59.7px;" width="8" height="8" viewBox="0 0 8 8"><circle cx="4" cy="4" r="3.7" fill="#d0d0d0"/><rect x="3.4" y="3.4" width="1.2" height="2.8" fill="#333"/><rect x="3.4" y="1.7" width="1.2" height="1.1" fill="#333"/></svg>
<span class="t" style="left:807.00px;top:59px;font-size:8.4px;color:#c6c6c6;transform:scaleX(1.0390);transform-origin:left center;">Inspector</span>
<svg style="left:992.5px;top:59px;" width="7" height="8" viewBox="0 0 7 8"><rect x=".6" y="3.5" width="5.4" height="3.4" fill="none" stroke="#c8c8c8" stroke-width=".9"/><path d="M1.6 3.5 V2.1 A1.6 1.6 0 0 1 4.8 2.1" fill="none" stroke="#c8c8c8" stroke-width=".9"/></svg>
<svg style="left:1005.5px;top:58.5px;" width="3" height="9" viewBox="0 0 3 9"><g fill="#c8c8c8"><rect x=".7" y=".6" width="1.5" height="1.5"/><rect x=".7" y="3.6" width="1.5" height="1.5"/><rect x=".7" y="6.6" width="1.5" height="1.5"/></g></svg>
<div style="left:792px;top:69px;width:1px;height:462px;background:#2a2a2a;"></div>
<svg style="left:795.5px;top:75.5px;" width="15" height="15" viewBox="0 0 15 15"><path d="M7.5 1 L13.6 3.8 V10.4 L7.5 13.8 L1.4 10.4 V3.8Z M1.4 3.8 L7.5 7 L13.6 3.8 M7.5 7 V13.8" fill="none" stroke="#d4d4d4" stroke-width="1" stroke-linejoin="round"/></svg>
<svg style="left:808.2px;top:90.3px;" width="5" height="3.4" viewBox="0 0 5 3.4"><path d="M.3 .3 H4.7 L2.5 3.1Z" fill="#c8c8c8"/></svg>
<div style="left:821.8px;top:77.7px;width:8px;height:8px;background:#2a2a2a;border-radius:1.5px;box-shadow:0 0 0 .5px #1c1c1c;"></div>
<svg style="left:821.8px;top:77.7px;" width="8" height="8" viewBox="0 0 8 8"><path d="M1.6 4.2 L3.3 6 L6.6 2" fill="none" stroke="#e4e4e4" stroke-width="1.2"/></svg>
<div style="left:835px;top:76.2px;width:124.6px;height:11.2px;background:#2a2a2a;border-radius:1.5px;box-shadow:0 0 0 .5px #212121;"></div>
<span class="t" style="left:836.90px;top:78px;font-size:8.4px;color:#e6e6e6;transform:scaleX(1.0285);transform-origin:left center;text-shadow:.3px 0 0 #e6e6e6;">GameState</span>
<div style="left:962.5px;top:77.7px;width:8px;height:8px;background:#2a2a2a;border-radius:1.5px;box-shadow:0 0 0 .5px #1c1c1c;"></div>
<span class="t" style="left:974.60px;top:78px;font-size:8.4px;color:#c6c6c6;transform:scaleX(1.0472);transform-origin:left center;">Static</span>
<svg style="left:997.2px;top:80px;" width="6" height="4" viewBox="0 0 6 4"><path d="M.4 .4 H5.6 L3 3.6Z" fill="#c8c8c8"/></svg>
<span class="t" style="left:819.20px;top:93px;font-size:8.4px;color:#c6c6c6;transform:scaleX(1.0115);transform-origin:left center;">Tag</span>
<div style="left:837.4px;top:92.4px;width:68.6px;height:10.2px;background:#515151;border-radius:1.5px;"></div>
<span class="t" style="left:839.40px;top:93px;font-size:8.4px;color:#dcdcdc;transform:scaleX(1.0046);transform-origin:left center;">Untagged</span>
<svg style="left:897.3px;top:95.6px;" width="6" height="4" viewBox="0 0 6 4"><path d="M.4 .4 H5.6 L3 3.6Z" fill="#c8c8c8"/></svg>
<span class="t" style="left:916.00px;top:93px;font-size:8.4px;color:#c6c6c6;transform:scaleX(1.0089);transform-origin:left center;">Layer</span>
<div style="left:941.7px;top:92.4px;width:62.3px;height:10.2px;background:#515151;border-radius:1.5px;"></div>
<span class="t" style="left:943.40px;top:93px;font-size:8.4px;color:#dcdcdc;transform:scaleX(0.9048);transform-origin:left center;">UI</span>
<svg style="left:994.6px;top:95.6px;" width="6" height="4" viewBox="0 0 6 4"><path d="M.4 .4 H5.6 L3 3.6Z" fill="#c8c8c8"/></svg>
<div style="left:793px;top:108.6px;width:215px;height:0.9px;background:#1f1f1f;"></div>
<div style="left:793px;top:109.5px;width:215px;height:13.9px;background:#3e3e3e;"></div>
<svg style="left:794.5px;top:114.2px;" width="6" height="4" viewBox="0 0 6 4"><path d="M.4 .4 H5.6 L3 3.8Z" fill="#8a8a8a"/></svg>
<span class="t" style="left:831.10px;top:112px;font-size:8.4px;color:#e0e0e0;font-weight:bold;-webkit-text-stroke:0;transform:scaleX(0.9916);transform-origin:left center;">Rect Transform</span>
<svg style="left:967.5px;top:112.2px;" width="8" height="8" viewBox="0 0 8 8"><circle cx="4" cy="4" r="3.7" fill="#c4c4c4"/><text x="4" y="6.2" font-size="6.2" font-weight="bold" text-anchor="middle" fill="#383838" font-family="Liberation Sans, sans-serif">?</text></svg>
<svg style="left:981px;top:112.2px;" width="9" height="8" viewBox="0 0 9 8"><path d="M.4 2.4 H8.6 M.4 5.6 H8.6" stroke="#c4c4c4" stroke-width=".8"/><rect x="5" y=".8" width="1.6" height="3.2" fill="#c4c4c4"/><rect x="2.2" y="4" width="1.6" height="3.2" fill="#c4c4c4"/></svg>
<svg style="left:997.3px;top:111.8px;" width="3" height="9" viewBox="0 0 3 9"><g fill="#c8c8c8"><rect x=".7" y=".6" width="1.5" height="1.5"/><rect x=".7" y="3.6" width="1.5" height="1.5"/><rect x=".7" y="6.6" width="1.5" height="1.5"/></g></svg>
<svg style="left:804.8px;top:111.6px;" width="9.4" height="9.4" viewBox="0 0 9.4 9.4"><path d="M.6 3 V.6 H3 M6.4 .6 H8.8 V3 M8.8 6.4 V8.8 H6.4 M3 8.8 H.6 V6.4" fill="none" stroke="#d0d0d0" stroke-width="1"/><path d="M1 1 L3.4 3.4 M8.4 1 L6 3.4 M1 8.4 L3.4 6 M8.4 8.4 L6 6" stroke="#d0d0d0" stroke-width=".9"/></svg>
<span class="t" style="left:809.20px;top:129px;font-size:7.3px;color:#a8a8a8;transform:scaleX(1.0597);transform-origin:left center;">center</span>
<span class="t" style="left:785.5px;top:149px;width:30px;text-align:center;font-size:7.3px;color:#a8a8a8;transform:rotate(-90deg) scaleX(.92);transform-origin:center center;">middle</span>
<svg style="left:808.7px;top:141px;" width="24" height="24" viewBox="0 0 24 24"><rect x=".4" y=".4" width="23.2" height="23.2" fill="#3a3a3a" stroke="#686868" stroke-width=".8"/><rect x="6.6" y="6.6" width="10.8" height="10.8" fill="none" stroke="#b8b8b8" stroke-width=".9"/><path d="M12 2.4 V21.6 M2.4 12 H21.6" stroke="#b0503a" stroke-width=".8"/><rect x="11" y="11" width="2" height="2" fill="#e0b040"/></svg>
<span class="t" style="left:888.00px;top:129px;font-size:8.4px;color:#c6c6c6;transform:scaleX(0.9370);transform-origin:left center;">Pos X</span>
<span class="t" style="left:927.70px;top:129px;font-size:8.4px;color:#c6c6c6;transform:scaleX(0.9434);transform-origin:left center;">Pos Y</span>
<span class="t" style="left:966.60px;top:129px;font-size:8.4px;color:#c6c6c6;transform:scaleX(0.9572);transform-origin:left center;">Pos Z</span>
<div style="left:888px;top:139.8px;width:36.7px;height:11.4px;overflow:hidden;background:#2a2a2a;border-radius:1.5px;box-shadow:0 0 0 .5px #212121;">
<span class="t" style="left:1.30px;top:2px;font-size:8.4px;color:#d8d8d8;transform:scaleX(1.0572);transform-origin:left center;">-7.203125</span>
</div>
<div style="left:927.7px;top:139.8px;width:36.5px;height:11.4px;background:#2a2a2a;border-radius:1.5px;box-shadow:0 0 0 .5px #212121;"></div>
<span class="t" style="left:929.30px;top:141px;font-size:8.4px;color:#d8d8d8;">0</span>
<div style="left:966.6px;top:139.8px;width:37.6px;height:11.4px;background:#2a2a2a;border-radius:1.5px;box-shadow:0 0 0 .5px #212121;"></div>
<span class="t" style="left:968.20px;top:141px;font-size:8.4px;color:#d8d8d8;">0</span>
<span class="t" style="left:888.00px;top:153px;font-size:8.4px;color:#c6c6c6;transform:scaleX(0.9920);transform-origin:left center;">Width</span>
<span class="t" style="left:927.70px;top:153px;font-size:8.4px;color:#c6c6c6;transform:scaleX(0.9966);transform-origin:left center;">Height</span>
<div style="left:888px;top:163.5px;width:36.7px;height:11.4px;background:#2a2a2a;border-radius:1.5px;box-shadow:0 0 0 .5px #212121;"></div>
<span class="t" style="left:889.60px;top:165px;font-size:8.4px;color:#d8d8d8;">160</span>
<div style="left:927.7px;top:163.5px;width:36.5px;height:11.4px;background:#2a2a2a;border-radius:1.5px;box-shadow:0 0 0 .5px #212121;"></div>
<span class="t" style="left:929.30px;top:165px;font-size:8.4px;color:#d8d8d8;">30</span>
<div style="left:970px;top:163.5px;width:15.6px;height:11.4px;background:#585858;border-radius:1.5px 0 0 1.5px;"></div>
<div style="left:986.2px;top:163.5px;width:18px;height:11.4px;background:#585858;border-radius:0 1.5px 1.5px 0;"></div>
<svg style="left:973.5px;top:165.5px;" width="8" height="7.6" viewBox="0 0 8 7.6"><rect x=".6" y=".6" width="6.8" height="6.4" fill="none" stroke="#8a8a8a" stroke-width=".8" stroke-dasharray="1.4 1"/></svg>
<span class="t" style="left:992.31px;top:166px;font-size:8px;color:#9a9a9a;">R</span>
<svg style="left:795px;top:180.2px;" width="6" height="4" viewBox="0 0 6 4"><path d="M.4 .4 H5.6 L3 3.8Z" fill="#8a8a8a"/></svg>
<span class="t" style="left:804.20px;top:178px;font-size:8.4px;color:#c6c6c6;">Anchors</span>
<span class="t" style="left:813.90px;top:190px;font-size:8.4px;color:#c6c6c6;">Min</span>
<span class="t" style="left:888.30px;top:190px;font-size:8.4px;color:#c6c6c6;">X</span>
<div style="left:895.4px;top:188.7px;width:29.8px;height:11.6px;background:#2a2a2a;border-radius:1.5px;box-shadow:0 0 0 .5px #212121;"></div>
<span class="t" style="left:897.40px;top:190px;font-size:8.4px;color:#d8d8d8;">0.5</span>
<span class="t" style="left:928.30px;top:190px;font-size:8.4px;color:#c6c6c6;">Y</span>
<div style="left:935.2px;top:188.7px;width:29.2px;height:11.6px;background:#2a2a2a;border-radius:1.5px;box-shadow:0 0 0 .5px #212121;"></div>
<span class="t" style="left:937.20px;top:190px;font-size:8.4px;color:#d8d8d8;">0.5</span>
<span class="t" style="left:813.90px;top:204px;font-size:8.4px;color:#c6c6c6;transform:scaleX(0.9767);transform-origin:left center;">Max</span>
<span class="t" style="left:888.30px;top:204px;font-size:8.4px;color:#c6c6c6;">X</span>
<div style="left:895.4px;top:202.3px;width:29.8px;height:11.6px;background:#2a2a2a;border-radius:1.5px;box-shadow:0 0 0 .5px #212121;"></div>
<span class="t" style="left:897.40px;top:204px;font-size:8.4px;color:#d8d8d8;">0.5</span>
<span class="t" style="left:928.30px;top:204px;font-size:8.4px;color:#c6c6c6;">Y</span>
<div style="left:935.2px;top:202.3px;width:29.2px;height:11.6px;background:#2a2a2a;border-radius:1.5px;box-shadow:0 0 0 .5px #212121;"></div>
<span class="t" style="left:937.20px;top:204px;font-size:8.4px;color:#d8d8d8;">0.5</span>
<span class="t" style="left:803.60px;top:218px;font-size:8.4px;color:#c6c6c6;transform:scaleX(1.0495);transform-origin:left center;">Pivot</span>
<span class="t" style="left:888.30px;top:218px;font-size:8.4px;color:#c6c6c6;">X</span>
<div style="left:895.4px;top:216.6px;width:29.8px;height:11.6px;background:#2a2a2a;border-radius:1.5px;box-shadow:0 0 0 .5px #212121;"></div>
<span class="t" style="left:897.40px;top:218px;font-size:8.4px;color:#d8d8d8;">0.5</span>
<span class="t" style="left:928.30px;top:218px;font-size:8.4px;color:#c6c6c6;">Y</span>
<div style="left:935.2px;top:216.6px;width:29.2px;height:11.6px;background:#2a2a2a;border-radius:1.5px;box-shadow:0 0 0 .5px #212121;"></div>
<span class="t" style="left:937.20px;top:218px;font-size:8.4px;color:#d8d8d8;">0.5</span>
<span class="t" style="left:803.60px;top:236px;font-size:8.4px;color:#c6c6c6;transform:scaleX(1.0132);transform-origin:left center;">Rotation</span>
<span class="t" style="left:890.30px;top:236px;font-size:8.4px;color:#c6c6c6;">X</span>
<div style="left:896.5px;top:234.8px;width:29.2px;height:11.6px;background:#2a2a2a;border-radius:1.5px;box-shadow:0 0 0 .5px #212121;"></div>
<span class="t" style="left:898.60px;top:236px;font-size:8.4px;color:#d8d8d8;">0</span>
<span class="t" style="left:930.00px;top:236px;font-size:8.4px;color:#c6c6c6;">Y</span>
<div style="left:936px;top:234.8px;width:28.4px;height:11.6px;background:#2a2a2a;border-radius:1.5px;box-shadow:0 0 0 .5px #212121;"></div>
<span class="t" style="left:938.20px;top:236px;font-size:8.4px;color:#d8d8d8;">0</span>
<span class="t" style="left:968.80px;top:236px;font-size:8.4px;color:#c6c6c6;">Z</span>
<div style="left:975.5px;top:234.8px;width:28.9px;height:11.6px;background:#2a2a2a;border-radius:1.5px;box-shadow:0 0 0 .5px #212121;"></div>
<span class="t" style="left:977.80px;top:236px;font-size:8.4px;color:#d8d8d8;">0</span>
<span class="t" style="left:803.60px;top:250px;font-size:8.4px;color:#c6c6c6;transform:scaleX(1.0184);transform-origin:left center;">Scale</span>
<span class="t" style="left:890.30px;top:250px;font-size:8.4px;color:#c6c6c6;">X</span>
<div style="left:896.5px;top:248.2px;width:29.2px;height:11.6px;background:#2a2a2a;border-radius:1.5px;box-shadow:0 0 0 .5px #212121;"></div>
<span class="t" style="left:898.60px;top:250px;font-size:8.4px;color:#d8d8d8;">1</span>
<span class="t" style="left:930.00px;top:250px;font-size:8.4px;color:#c6c6c6;">Y</span>
<div style="left:936px;top:248.2px;width:28.4px;height:11.6px;background:#2a2a2a;border-radius:1.5px;box-shadow:0 0 0 .5px #212121;"></div>
<span class="t" style="left:938.20px;top:250px;font-size:8.4px;color:#d8d8d8;">1</span>
<span class="t" style="left:968.80px;top:250px;font-size:8.4px;color:#c6c6c6;">Z</span>
<div style="left:975.5px;top:248.2px;width:28.9px;height:11.6px;background:#2a2a2a;border-radius:1.5px;box-shadow:0 0 0 .5px #212121;"></div>
<span class="t" style="left:977.80px;top:250px;font-size:8.4px;color:#d8d8d8;">1</span>
<div style="left:793px;top:266.8px;width:215px;height:0.9px;background:#1f1f1f;"></div>
<div style="left:793px;top:267.7px;width:215px;height:12.9px;background:#3e3e3e;"></div>
<svg style="left:794.5px;top:271.9px;" width="6" height="4" viewBox="0 0 6 4"><path d="M.4 .4 H5.6 L3 3.8Z" fill="#8a8a8a"/></svg>
<span class="t" style="left:831.10px;top:270px;font-size:8.4px;color:#e0e0e0;font-weight:bold;-webkit-text-stroke:0;transform:scaleX(0.9783);transform-origin:left center;">Canvas Renderer</span>
<svg style="left:967.5px;top:269.9px;" width="8" height="8" viewBox="0 0 8 8"><circle cx="4" cy="4" r="3.7" fill="#c4c4c4"/><text x="4" y="6.2" font-size="6.2" font-weight="bold" text-anchor="middle" fill="#383838" font-family="Liberation Sans, sans-serif">?</text></svg>
<svg style="left:981px;top:269.9px;" width="9" height="8" viewBox="0 0 9 8"><path d="M.4 2.4 H8.6 M.4 5.6 H8.6" stroke="#c4c4c4" stroke-width=".8"/><rect x="5" y=".8" width="1.6" height="3.2" fill="#c4c4c4"/><rect x="2.2" y="4" width="1.6" height="3.2" fill="#c4c4c4"/></svg>
<svg style="left:997.3px;top:269.5px;" width="3" height="9" viewBox="0 0 3 9"><g fill="#c8c8c8"><rect x=".7" y=".6" width="1.5" height="1.5"/><rect x=".7" y="3.6" width="1.5" height="1.5"/><rect x=".7" y="6.6" width="1.5" height="1.5"/></g></svg>
<svg style="left:804px;top:270px;" width="11" height="8" viewBox="0 0 11 8"><path d="M.5 4 Q5.5 -1.2 10.5 4 Q5.5 9.2 .5 4Z" fill="none" stroke="#d0d0d0" stroke-width=".9"/><circle cx="5.5" cy="4" r="1.8" fill="none" stroke="#d0d0d0" stroke-width=".9"/></svg>
<span class="t" style="left:803.60px;top:286px;font-size:8.4px;color:#c6c6c6;transform:scaleX(1.0132);transform-origin:left center;">Cull Transparent Me:</span>
<div style="left:885px;top:286px;width:8px;height:8px;background:#2a2a2a;border-radius:1.5px;box-shadow:0 0 0 .5px #1c1c1c;"></div>
<svg style="left:885px;top:286px;" width="8" height="8" viewBox="0 0 8 8"><path d="M1.6 4.2 L3.3 6 L6.6 2" fill="none" stroke="#e4e4e4" stroke-width="1.2"/></svg>
<div style="left:793px;top:300.9px;width:215px;height:0.9px;background:#1f1f1f;"></div>
<div style="left:793px;top:301.8px;width:215px;height:14.2px;background:#3e3e3e;"></div>
<svg style="left:794.5px;top:307.5px;" width="6" height="4" viewBox="0 0 6 4"><path d="M.4 .4 H5.6 L3 3.8Z" fill="#8a8a8a"/></svg>
<span class="t" style="left:831.10px;top:305px;font-size:8.4px;color:#e0e0e0;font-weight:bold;-webkit-text-stroke:0;transform:scaleX(0.9968);transform-origin:left center;">Image</span>
<svg style="left:967.5px;top:305.5px;" width="8" height="8" viewBox="0 0 8 8"><circle cx="4" cy="4" r="3.7" fill="#c4c4c4"/><text x="4" y="6.2" font-size="6.2" font-weight="bold" text-anchor="middle" fill="#383838" font-family="Liberation Sans, sans-serif">?</text></svg>
<svg style="left:981px;top:305.5px;" width="9" height="8" viewBox="0 0 9 8"><path d="M.4 2.4 H8.6 M.4 5.6 H8.6" stroke="#c4c4c4" stroke-width=".8"/><rect x="5" y=".8" width="1.6" height="3.2" fill="#c4c4c4"/><rect x="2.2" y="4" width="1.6" height="3.2" fill="#c4c4c4"/></svg>
<svg style="left:997.3px;top:305.1px;" width="3" height="9" viewBox="0 0 3 9"><g fill="#c8c8c8"><rect x=".7" y=".6" width="1.5" height="1.5"/><rect x=".7" y="3.6" width="1.5" height="1.5"/><rect x=".7" y="6.6" width="1.5" height="1.5"/></g></svg>
<svg style="left:804.8px;top:305px;" width="9.4" height="9.4" viewBox="0 0 9.4 9.4"><path d="M.6 3 V.6 H3 M6.4 .6 H8.8 V3 M8.8 6.4 V8.8 H6.4 M3 8.8 H.6 V6.4" fill="none" stroke="#d0d0d0" stroke-width="1"/><rect x="2.4" y="2.4" width="4.6" height="4.6" fill="#a0a0a0"/><path d="M2.6 6.8 L4.4 4.4 L5.4 5.6 L6 5 L6.9 6.8Z" fill="#e8e8e8"/></svg>
<div style="left:818.5px;top:305.5px;width:8px;height:8px;background:#2a2a2a;border-radius:1.5px;box-shadow:0 0 0 .5px #1c1c1c;"></div>
<svg style="left:818.5px;top:305.5px;" width="8" height="8" viewBox="0 0 8 8"><path d="M1.6 4.2 L3.3 6 L6.6 2" fill="none" stroke="#e4e4e4" stroke-width="1.2"/></svg>
<span class="t" style="left:803.60px;top:321px;font-size:8.4px;color:#c6c6c6;">Source Image</span>
<div style="left:884.4px;top:319.5px;width:107.1px;height:11.5px;background:#2a2a2a;border-radius:1.5px;box-shadow:0 0 0 .5px #212121;"></div>
<div style="left:991.8px;top:319.5px;width:12.6px;height:11.5px;background:#323232;border-radius:0 1.5px 1.5px 0;"></div>
<svg style="left:993.4px;top:321.2px;" width="8" height="8" viewBox="0 0 8 8"><circle cx="4" cy="4" r="3.1" fill="none" stroke="#c4c4c4" stroke-width=".8"/><circle cx="4" cy="4" r="1.1" fill="#c4c4c4"/></svg>
<svg style="left:886.6px;top:321.8px;" width="7" height="7" viewBox="0 0 7 7"><path d="M.5 2.2 V.5 H2.2 M4.8 .5 H6.5 V2.2 M6.5 4.8 V6.5 H4.8 M2.2 6.5 H.5 V4.8" fill="none" stroke="#b8b8c8" stroke-width=".8"/><rect x="2" y="2" width="3" height="3" fill="#8a8aa8"/></svg>
<span class="t" style="left:894.70px;top:321px;font-size:8.4px;color:#d8d8d8;">UISprite</span>
<span class="t" style="left:803.60px;top:335px;font-size:8.4px;color:#c6c6c6;transform:scaleX(1.0162);transform-origin:left center;">Color</span>
<div style="left:884.4px;top:333.1px;width:107.1px;height:10.4px;background:#ffffff;"></div>
<svg style="left:992.9px;top:334px;" width="9" height="9" viewBox="0 0 9 9"><path d="M1 8 L1.4 6.4 L5.2 2.6 L6.4 3.8 L2.6 7.6Z" fill="#c4c4c4"/><path d="M5 1.6 L7.4 4 M6 2.8 L7.6 1.2" stroke="#c4c4c4" stroke-width="1.5" stroke-linecap="round"/></svg>
<span class="t" style="left:803.60px;top:348px;font-size:8.4px;color:#c6c6c6;transform:scaleX(1.0275);transform-origin:left center;">Material</span>
<div style="left:884.4px;top:346.8px;width:107.1px;height:11.4px;background:#2a2a2a;border-radius:1.5px;box-shadow:0 0 0 .5px #212121;"></div>
<div style="left:991.8px;top:346.8px;width:12.6px;height:11.4px;background:#323232;border-radius:0 1.5px 1.5px 0;"></div>
<svg style="left:993.4px;top:348.4px;" width="8" height="8" viewBox="0 0 8 8"><circle cx="4" cy="4" r="3.1" fill="none" stroke="#c4c4c4" stroke-width=".8"/><circle cx="4" cy="4" r="1.1" fill="#c4c4c4"/></svg>
<span class="t" style="left:886.40px;top:348px;font-size:8.4px;color:#d8d8d8;transform:scaleX(1.0123);transform-origin:left center;">None (Material)</span>
<span class="t" style="left:803.60px;top:361px;font-size:8.4px;color:#c6c6c6;transform:scaleX(1.0488);transform-origin:left center;">Raycast Target</span>
<div style="left:884.4px;top:361.3px;width:8px;height:8px;background:#2a2a2a;border-radius:1.5px;box-shadow:0 0 0 .5px #1c1c1c;"></div>
<svg style="left:884.4px;top:361.3px;" width="8" height="8" viewBox="0 0 8 8"><path d="M1.6 4.2 L3.3 6 L6.6 2" fill="none" stroke="#e4e4e4" stroke-width="1.2"/></svg>
<svg style="left:795.4px;top:375.6px;" width="4" height="6" viewBox="0 0 4 6"><path d="M.4 .4 V5.6 L3.8 3Z" fill="#8a8a8a"/></svg>
<span class="t" style="left:803.60px;top:375px;font-size:8.4px;color:#c6c6c6;transform:scaleX(1.0157);transform-origin:left center;">Raycast Padding</span>
<span class="t" style="left:803.60px;top:387px;font-size:8.4px;color:#c6c6c6;transform:scaleX(1.0403);transform-origin:left center;">Maskable</span>
<div style="left:884.4px;top:387.6px;width:8px;height:8px;background:#2a2a2a;border-radius:1.5px;box-shadow:0 0 0 .5px #1c1c1c;"></div>
<svg style="left:884.4px;top:387.6px;" width="8" height="8" viewBox="0 0 8 8"><path d="M1.6 4.2 L3.3 6 L6.6 2" fill="none" stroke="#e4e4e4" stroke-width="1.2"/></svg>
<span class="t" style="left:805.60px;top:401px;font-size:8.4px;color:#c6c6c6;transform:scaleX(1.0151);transform-origin:left center;">Image Type</span>
<div style="left:886.4px;top:400px;width:115px;height:10.6px;background:#515151;border-radius:1.5px;"></div>
<span class="t" style="left:888.80px;top:401px;font-size:8.4px;color:#dcdcdc;transform:scaleX(1.0490);transform-origin:left center;">Sliced</span>
<svg style="left:993px;top:403.2px;" width="6" height="4" viewBox="0 0 6 4"><path d="M.4 .4 H5.6 L3 3.6Z" fill="#c8c8c8"/></svg>
<span class="t" style="left:815.50px;top:415px;font-size:8.4px;color:#c6c6c6;transform:scaleX(1.0110);transform-origin:left center;">Fill Center</span>
<div style="left:886.3px;top:414.7px;width:8px;height:8px;background:#2a2a2a;border-radius:1.5px;box-shadow:0 0 0 .5px #1c1c1c;"></div>
<svg style="left:886.3px;top:414.7px;" width="8" height="8" viewBox="0 0 8 8"><path d="M1.6 4.2 L3.3 6 L6.6 2" fill="none" stroke="#e4e4e4" stroke-width="1.2"/></svg>
<span class="t" style="left:815.50px;top:427px;font-size:8.4px;color:#c6c6c6;transform:scaleX(1.0088);transform-origin:left center;">Pixels Per Unit Mu</span>
<div style="left:887px;top:426px;width:114.3px;height:10.9px;background:#2a2a2a;border-radius:1.5px;box-shadow:0 0 0 .5px #212121;"></div>
<span class="t" style="left:887.90px;top:427px;font-size:8.4px;color:#d8d8d8;">1</span>
<div style="left:793px;top:444.3px;width:215px;height:0.9px;background:#1f1f1f;"></div>
<div style="left:793px;top:445.2px;width:215px;height:13px;background:#3e3e3e;"></div>
<svg style="left:794.5px;top:449.4px;" width="6" height="4" viewBox="0 0 6 4"><path d="M.4 .4 H5.6 L3 3.8Z" fill="#8a8a8a"/></svg>
<span class="t" style="left:831.10px;top:447px;font-size:8.4px;color:#e0e0e0;font-weight:bold;-webkit-text-stroke:0;transform:scaleX(0.9314);transform-origin:left center;">Button</span>
<svg style="left:967.5px;top:447.4px;" width="8" height="8" viewBox="0 0 8 8"><circle cx="4" cy="4" r="3.7" fill="#c4c4c4"/><text x="4" y="6.2" font-size="6.2" font-weight="bold" text-anchor="middle" fill="#383838" font-family="Liberation Sans, sans-serif">?</text></svg>
<svg style="left:981px;top:447.4px;" width="9" height="8" viewBox="0 0 9 8"><path d="M.4 2.4 H8.6 M.4 5.6 H8.6" stroke="#c4c4c4" stroke-width=".8"/><rect x="5" y=".8" width="1.6" height="3.2" fill="#c4c4c4"/><rect x="2.2" y="4" width="1.6" height="3.2" fill="#c4c4c4"/></svg>
<svg style="left:997.3px;top:447px;" width="3" height="9" viewBox="0 0 3 9"><g fill="#c8c8c8"><rect x=".7" y=".6" width="1.5" height="1.5"/><rect x=".7" y="3.6" width="1.5" height="1.5"/><rect x=".7" y="6.6" width="1.5" height="1.5"/></g></svg>
<svg style="left:805px;top:447px;" width="8.6" height="8.6" viewBox="0 0 8.6 8.6"><rect x=".5" y=".5" width="7.6" height="7.6" rx="1.8" fill="#c4c4c4"/><rect x="2" y="2" width="4.6" height="4.6" rx="1" fill="#9a9a9a"/></svg>
<div style="left:818.7px;top:447.4px;width:8px;height:8px;background:#2a2a2a;border-radius:1.5px;box-shadow:0 0 0 .5px #1c1c1c;"></div>
<svg style="left:818.7px;top:447.4px;" width="8" height="8" viewBox="0 0 8 8"><path d="M1.6 4.2 L3.3 6 L6.6 2" fill="none" stroke="#e4e4e4" stroke-width="1.2"/></svg>
<span class="t" style="left:803.70px;top:463px;font-size:8.4px;color:#c6c6c6;transform:scaleX(1.0365);transform-origin:left center;">Interactable</span>
<div style="left:884.4px;top:463.2px;width:8px;height:8px;background:#2a2a2a;border-radius:1.5px;box-shadow:0 0 0 .5px #1c1c1c;"></div>
<svg style="left:884.4px;top:463.2px;" width="8" height="8" viewBox="0 0 8 8"><path d="M1.6 4.2 L3.3 6 L6.6 2" fill="none" stroke="#e4e4e4" stroke-width="1.2"/></svg>
<span class="t" style="left:803.70px;top:476px;font-size:8.4px;color:#c6c6c6;transform:scaleX(1.0363);transform-origin:left center;">Transition</span>
<div style="left:884.5px;top:475.4px;width:118.7px;height:10px;background:#515151;border-radius:1.5px;"></div>
<span class="t" style="left:886.80px;top:476px;font-size:8.4px;color:#dcdcdc;transform:scaleX(1.0348);transform-origin:left center;">Color Tint</span>
<svg style="left:994.5px;top:478.4px;" width="6" height="4" viewBox="0 0 6 4"><path d="M.4 .4 H5.6 L3 3.6Z" fill="#c8c8c8"/></svg>
<span class="t" style="left:813.60px;top:490px;font-size:8.4px;color:#c6c6c6;transform:scaleX(1.0128);transform-origin:left center;">Target Graphic</span>
<div style="left:884.5px;top:488.4px;width:108px;height:11.4px;background:#2a2a2a;border-radius:1.5px;box-shadow:0 0 0 .5px #212121;"></div>
<div style="left:992.8px;top:488.4px;width:11.6px;height:11.4px;background:#323232;border-radius:0 1.5px 1.5px 0;"></div>
<svg style="left:993.6px;top:490px;" width="8" height="8" viewBox="0 0 8 8"><circle cx="4" cy="4" r="3.1" fill="none" stroke="#c4c4c4" stroke-width=".8"/><circle cx="4" cy="4" r="1.1" fill="#c4c4c4"/></svg>
<svg style="left:886.8px;top:490.7px;" width="7" height="7" viewBox="0 0 7 7"><path d="M.5 2.2 V.5 H2.2 M4.8 .5 H6.5 V2.2 M6.5 4.8 V6.5 H4.8 M2.2 6.5 H.5 V4.8" fill="none" stroke="#c8c8c8" stroke-width=".8"/><path d="M1.2 1.2 L5.8 5.8 M5.8 1.2 L1.2 5.8" stroke="#c8c8c8" stroke-width=".7"/></svg>
<span class="t" style="left:895.40px;top:490px;font-size:8.4px;color:#d8d8d8;transform:scaleX(0.9761);transform-origin:left center;">GameState (Image)</span>
<span class="t" style="left:813.60px;top:503px;font-size:8.4px;color:#c6c6c6;">Normal Color</span>
<div style="left:884.5px;top:502.2px;width:107.5px;height:9.8px;background:#ffffff;"></div>
<svg style="left:993.9px;top:502.5px;" width="9" height="9" viewBox="0 0 9 9"><path d="M1 8 L1.4 6.4 L5.2 2.6 L6.4 3.8 L2.6 7.6Z" fill="#c4c4c4"/><path d="M5 1.6 L7.4 4 M6 2.8 L7.6 1.2" stroke="#c4c4c4" stroke-width="1.5" stroke-linecap="round"/></svg>
<div style="left:884.5px;top:514.3px;width:107.5px;height:1.4px;background:#f4f4f4;"></div>
<div style="left:793px;top:517.4px;width:223px;height:13.6px;background:#3c3c3c;"></div>
<div style="left:793px;top:517.2px;width:223px;height:0.8px;background:#242424;"></div>
<span class="t" style="left:796.70px;top:519px;font-size:8.4px;color:#dcdcdc;font-weight:bold;-webkit-text-stroke:0;transform:scaleX(0.9866);transform-origin:left center;">GameState</span>
<svg style="left:842.3px;top:521.6px;" width="6" height="4" viewBox="0 0 6 4"><path d="M.4 .4 H5.6 L3 3.6Z" fill="#c8c8c8"/></svg>
<div style="left:853px;top:520.4px;width:151px;height:6.2px;background:#393939;box-shadow:0 0 0 .5px #2e2e2e;"></div>
<svg style="left:1009.2px;top:519px;" width="3" height="9" viewBox="0 0 3 9"><g fill="#c8c8c8"><rect x=".7" y=".6" width="1.5" height="1.5"/><rect x=".7" y="3.6" width="1.5" height="1.5"/><rect x=".7" y="6.6" width="1.5" height="1.5"/></g></svg>
<div style="left:1008px;top:69px;width:7.8px;height:448.4px;background:#343434;"></div>
<div style="left:1008.4px;top:79.4px;width:6.4px;height:269px;background:#5a5a5a;border-radius:3.2px;"></div>
<svg style="left:1008.9px;top:72px;" width="6" height="4" viewBox="0 0 6 4"><path d="M.4 3.6 H5.6 L3 .4Z" fill="#c0c0c0"/></svg>
<svg style="left:1008.9px;top:509.6px;" width="6" height="4" viewBox="0 0 6 4"><path d="M.4 .4 H5.6 L3 3.6Z" fill="#c0c0c0"/></svg>
<svg style="left:967px;top:534.5px;" width="10" height="9.5" viewBox="0 0 10 9.5"><ellipse cx="5" cy="5.4" rx="2.6" ry="3.4" fill="#c8c8c8"/><path d="M1 2.4 L3 3.6 M9 2.4 L7 3.6 M.6 5.4 H2.4 M9.4 5.4 H7.6 M1 8.6 L3 7.4 M9 8.6 L7 7.4 M3.4 1.4 L4.2 2.4 M6.6 1.4 L5.8 2.4" stroke="#c8c8c8" stroke-width=".8"/><path d="M1 9 L9 .6" stroke="#1b1b1b" stroke-width="1.2"/><path d="M1.6 9.4 L9.4 1.2" stroke="#c8c8c8" stroke-width=".7"/></svg>
<svg style="left:984.5px;top:534.5px;" width="10" height="9.5" viewBox="0 0 10 9.5"><ellipse cx="5" cy="2.2" rx="3.8" ry="1.6" fill="#c8c8c8"/><path d="M1.2 3.4 V7.4 A3.8 1.6 0 0 0 8.8 7.4 V3.4 A3.8 1.6 0 0 1 1.2 3.4Z" fill="#c8c8c8"/><path d="M1.2 5.2 A3.8 1.6 0 0 0 8.8 5.2" stroke="#1b1b1b" stroke-width=".7" fill="none"/><path d="M1 9 L9 .6" stroke="#1b1b1b" stroke-width="1.2"/><path d="M1.6 9.4 L9.4 1.2" stroke="#c8c8c8" stroke-width=".7"/></svg>
<svg style="left:1002.5px;top:534.5px;" width="9.4" height="9.4" viewBox="0 0 9.4 9.4"><circle cx="4.7" cy="4.7" r="4" fill="none" stroke="#c8c8c8" stroke-width=".9"/><path d="M2.8 4.8 L4.2 6.2 L6.8 3.2" fill="none" stroke="#c8c8c8" stroke-width=".9"/></svg>
<svg style="left:9.8px;top:557.6px;" width="12" height="12" viewBox="0 0 12 12"><g fill="#f4f4f4"><path d="M0 1.6 L5.4 .9 V5.7 H0Z M6.2 .8 L12 0 V5.7 H6.2Z M0 6.4 H5.4 V11.2 L0 10.5Z M6.2 6.4 H12 V12 L6.2 11.2Z"/></g></svg>
<svg style="left:41px;top:557px;" width="12" height="12" viewBox="0 0 12 12"><circle cx="7.2" cy="4.8" r="3.6" fill="none" stroke="#f0f0f0" stroke-width="1.1"/><path d="M4.6 7.4 L.8 11.2" stroke="#f0f0f0" stroke-width="1.2"/></svg>
<svg style="left:73px;top:557.4px;" width="13" height="12" viewBox="0 0 13 12"><rect x="2.6" y="2.6" width="5.6" height="6.8" fill="none" stroke="#f0f0f0" stroke-width="1"/><path d="M.8 1 V3 M.8 9 V11 M10 1 V3 M10 9 V11 M2.6 1.6 H8.2 M2.6 10.4 H8.2" stroke="#f0f0f0" stroke-width="1"/><rect x="10.8" y="4.4" width="1.2" height="3.2" fill="#f0f0f0"/></svg>
<svg style="left:104.5px;top:554.6px;" width="18" height="18" viewBox="0 0 18 18"><defs><linearGradient id="eg" x1="0" y1="0" x2="1" y2="1"><stop offset="0" stop-color="#2f9be8"/><stop offset=".55" stop-color="#2bb6c8"/><stop offset="1" stop-color="#56d364"/></linearGradient></defs><path d="M1 10 A8 8 0 0 1 17 8 Q17 12 12.6 12 Q10.4 12 10.6 10.4 Q11.4 8.6 9 8 Q5 8 4.6 12 Q4.6 15.4 8.4 17 A8 8 0 0 1 1 10Z" fill="url(#eg)"/><path d="M4.4 12.4 Q5 16.4 9.4 17 Q12.6 17 14.6 14.6 Q11 16 8.4 13.8 Q7.4 12.6 7.8 11Z" fill="#1b6fc2"/><circle cx="4.6" cy="13.6" r="2.4" fill="#e06c8c"/><circle cx="4" cy="14" r="1" fill="#f4e0e0"/></svg>
<div style="left:138.7px;top:556px;width:14.8px;height:14.2px;background:#0a1c33;border-radius:1.5px;"></div>
<span class="t" style="left:140.94px;top:559px;font-size:8.6px;color:#39a8f6;font-weight:bold;-webkit-text-stroke:0;">Ps</span>
<div style="left:163.3px;top:549.8px;width:32.4px;height:26.5px;background:#bd600e;"></div>
<div style="left:163.3px;top:575.3px;width:32.4px;height:1px;background:#e8b88a;"></div>
<svg style="left:170.8px;top:555px;" width="17" height="17" viewBox="0 0 17 17"><circle cx="8.5" cy="8.5" r="8.2" fill="#f6f6f6"/><path d="M8.9 3.2 L13.2 5.6 V11.2 L8.9 13.8 L3.4 8.5Z" fill="#151515"/><path d="M8.9 8.5 L4.4 8.5 M8.9 8.5 L12.8 5.9 M8.9 8.5 L12.8 11" stroke="#f6f6f6" stroke-width="1.1"/></svg>
<div style="left:195.7px;top:549.8px;width:32.8px;height:26.5px;background:#363b42;"></div>
<div style="left:195.7px;top:575.2px;width:32.8px;height:1.1px;background:#9fb4c6;"></div>
<div style="left:206.2px;top:556.9px;width:12.9px;height:13.1px;background:#0c0c0c;"></div>
<svg style="left:206.2px;top:556.9px;" width="12.9" height="13.1" viewBox="0 0 12.9 13.1"><path d="M7 3.2 L10.2 5 V8.6 L7 10.4 L3 6.8Z" fill="#e8e8e8"/><path d="M7 6.8 L3.6 6.8 M7 6.8 L9.9 5.1 M7 6.8 L9.9 8.5" stroke="#0c0c0c" stroke-width=".8"/></svg>
<svg style="left:790.9px;top:561px;" width="10" height="6" viewBox="0 0 10 6"><path d="M.8 5.2 L5 1 L9.2 5.2" fill="none" stroke="#f2f2f2" stroke-width="1"/></svg>
<svg style="left:807.8px;top:556.6px;" width="8" height="14" viewBox="0 0 8 14"><rect x="2" y=".6" width="4" height="8" rx="2" fill="#dcdcdc"/><path d="M.8 7 A3.2 3.2 0 0 0 7.2 7 M4 10.2 V12.6 M2 12.8 H6" fill="none" stroke="#dcdcdc" stroke-width=".9"/></svg>
<svg style="left:823.4px;top:557.4px;" width="10" height="12.4" viewBox="0 0 10 12.4"><path d="M5 .4 L9.6 2 V6.4 Q9.4 10 5 12 Q.6 10 .4 6.4 V2Z" fill="#f0a818"/><path d="M5 1.8 L8.2 3 V6.4 Q8 9 5 10.4Z" fill="#f8d070"/></svg>
<svg style="left:839px;top:558px;" width="12" height="11" viewBox="0 0 12 11"><path d="M1.4 9.6 A8.6 8.6 0 0 1 10.4 1.2" fill="none" stroke="#8a96a0" stroke-width="1"/><path d="M3.8 9.8 A6 6 0 0 1 10.2 4" fill="none" stroke="#d8d8d8" stroke-width="1"/><path d="M6.2 10 A3.6 3.6 0 0 1 10 6.6" fill="none" stroke="#d8d8d8" stroke-width="1"/><circle cx="9.4" cy="9.6" r="1" fill="#d8d8d8"/></svg>
<svg style="left:853.5px;top:558.4px;" width="14" height="11" viewBox="0 0 14 11"><rect x=".6" y="1" width="11" height="6.4" rx="1" fill="#e4e4e4"/><rect x="11.8" y="3" width="1.4" height="2.6" fill="#e4e4e4"/><rect x="1.8" y="2.2" width="5" height="4" fill="#3a4650"/><circle cx="9.4" cy="7.6" r="2.8" fill="#24b04a"/><path d="M9.4 6 V9 M8.2 7.4 L9.4 6 L10.6 7.4" stroke="#fff" stroke-width=".8" fill="none"/></svg>
<svg style="left:869.5px;top:558px;" width="13" height="11" viewBox="0 0 13 11"><path d="M.8 3.8 H3 L6 1 V10 L3 7.2 H.8Z" fill="none" stroke="#e8e8e8" stroke-width=".9"/><path d="M7.8 3.6 Q9 5.5 7.8 7.4" fill="none" stroke="#c8c8c8" stroke-width=".8"/><path d="M9.6 2.2 Q11.6 5.5 9.6 8.8" fill="none" stroke="#8a96a0" stroke-width=".8"/></svg>
<svg style="left:885.5px;top:556.6px;" width="13" height="14" viewBox="0 0 13 14"><ellipse cx="6.4" cy="4.6" rx="3.4" ry="4" fill="#1a1a1a"/><ellipse cx="6.4" cy="9" rx="4.6" ry="4" fill="#1a1a1a"/><ellipse cx="6.4" cy="9.6" rx="2.8" ry="3" fill="#f2f2f2"/><path d="M2.6 7.4 Q6.4 9.6 10.2 7.4 L10 8.8 Q6.4 11 2.8 8.8Z" fill="#e8382c"/><path d="M4.8 5.6 Q6.4 7 8 5.6 Q6.4 5 4.8 5.6Z" fill="#f0a020"/><rect x="6.5" y="8" width="6" height="5.4" fill="#f0a020"/><path d="M2 13.4 H5.4 M7.4 13.4 H10.8" stroke="#f0a020" stroke-width="1.2"/></svg>
<svg style="left:902.7px;top:557.6px;" width="16.4" height="11.6" viewBox="0 0 16.4 11.6"><rect x=".6" y=".6" width="15.2" height="10.4" rx="1" fill="none" stroke="#e8e8e8" stroke-width=".9"/><path d="M2.8 3.4 H13.6 M2.8 5.8 H13.6" stroke="#e8e8e8" stroke-width=".9" stroke-dasharray="1.2 1.2"/><path d="M4.6 8.4 H11.8" stroke="#e8e8e8" stroke-width=".9"/></svg>
<span class="t cj" style="left:923.2px;top:558px;font-size:10.4px;line-height:13px;color:#f4f4f4;font-weight:400;-webkit-text-stroke:0;">英</span>
<span class="t" style="left:949.39px;top:553px;font-size:9.2px;color:#f2f2f2;transform:scaleX(0.9034);transform-origin:center center;">19:07</span>
<span class="t" style="left:938.22px;top:565px;font-size:9.2px;color:#f2f2f2;transform:scaleX(0.9744);transform-origin:center center;">2021/11/28</span>
<svg style="left:992.8px;top:557px;" width="13" height="13" viewBox="0 0 13 13"><path d="M1 1 H12 V8 L8.6 11.6 H1Z" fill="none" stroke="#f0f0f0" stroke-width="1"/><path d="M12 8 H8.6 V11.6" fill="none" stroke="#f0f0f0" stroke-width=".8"/><circle cx="10.6" cy="10.4" r="2" fill="#1b2633" stroke="#f0f0f0" stroke-width=".7"/></svg>
<svg style="left:994.6px;top:325px;" width="8" height="12" viewBox="0 0 8 12"><path d="M.6 .6 V9.6 L2.8 7.6 L4.4 11 L5.8 10.4 L4.2 7.2 H7Z" fill="#fff" stroke="#111" stroke-width=".7"/></svg>
<svg style="left:1px;top:167.5px;" width="4" height="10" viewBox="0 0 4 10"><path d="M2.6 .6 L1.4 9 L.6 9 L1.6 .6Z" fill="#d8d8d8"/><path d="M2.8 1 L2.2 8.6" stroke="#222" stroke-width=".6"/></svg>
</div></body></html>
